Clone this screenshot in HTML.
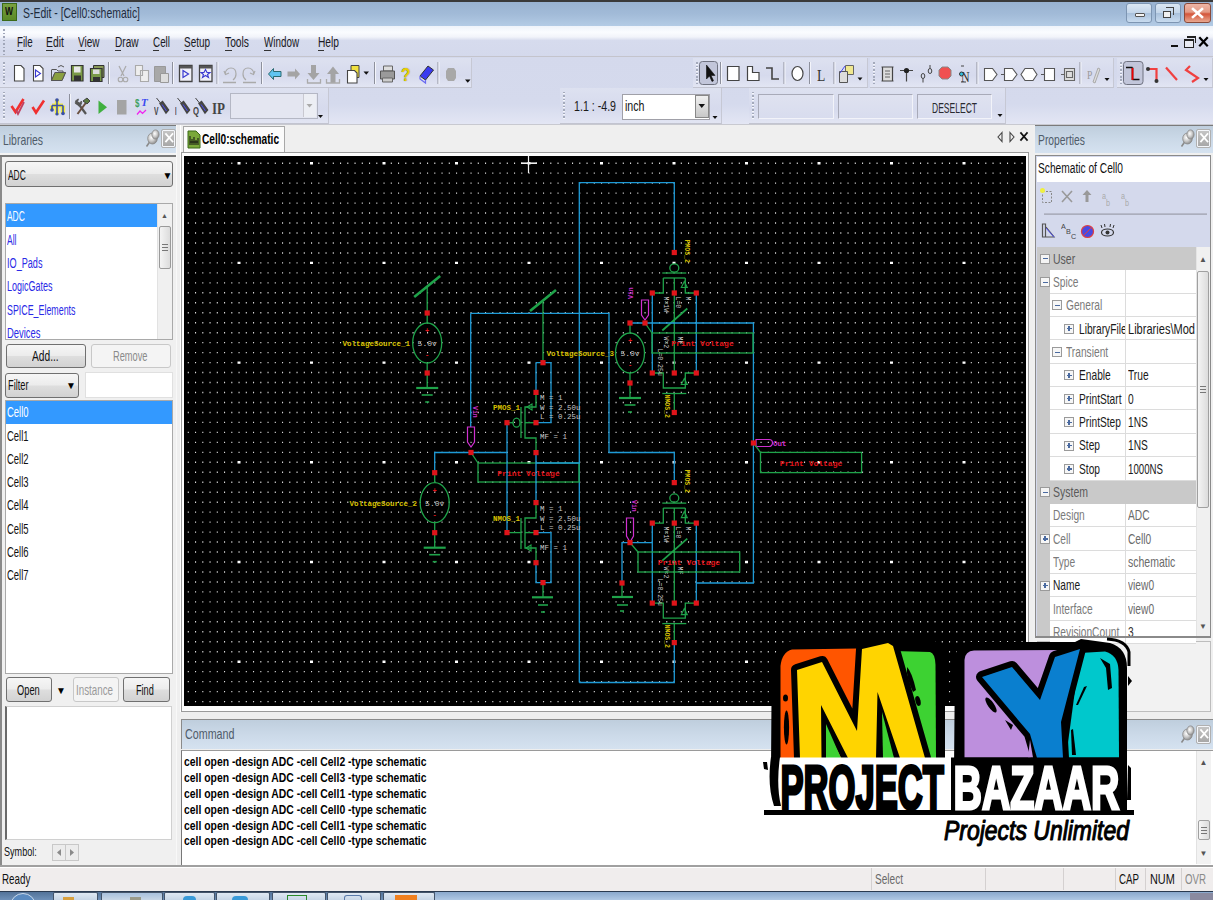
<!DOCTYPE html><html><head><meta charset="utf-8"><style>
*{margin:0;padding:0;box-sizing:border-box}
html,body{width:1213px;height:900px;overflow:hidden;background:#f0f0f0;font-family:"Liberation Sans",sans-serif}
.t{position:absolute;white-space:pre;line-height:1.2;transform-origin:0 0}
svg{position:absolute;left:0;top:0}
</style></head><body><div style="position:absolute;left:0px;top:0px;width:1213px;height:26px;background:linear-gradient(#97b1d0,#a2bbd8 55%,#b3cbe5)"></div>
<div style="position:absolute;left:0px;top:0px;width:1213px;height:1.5px;background:#3a3a3a"></div>
<div style="position:absolute;left:2px;top:2.5px;width:14.5px;height:18.5px;background:linear-gradient(#7aa040,#5a8a28);border:1px solid #3a6a18"></div>
<div class="t" style="left:4.5px;top:6.04px;font-size:10px;color:#111;font-weight:bold;transform:scaleX(0.85);">W</div>
<div class="t" style="left:23px;top:3.80px;font-size:15px;color:#1e2b3c;font-weight:normal;transform:scaleX(0.6948678331314988);">S-Edit - [Cell0:schematic]</div>
<div style="position:absolute;left:1126px;top:3px;width:26px;height:20px;background:linear-gradient(#dbe7f3,#c4d6ea 48%,#a9c1dc 52%,#c8dbef);border:1px solid #7d95b2;border-radius:3px"></div>
<div style="position:absolute;left:1155px;top:3px;width:26px;height:20px;background:linear-gradient(#dbe7f3,#c4d6ea 48%,#a9c1dc 52%,#c8dbef);border:1px solid #7d95b2;border-radius:3px"></div>
<div style="position:absolute;left:1134.5px;top:13px;width:10px;height:4px;background:#f4f4f4;border:1px solid #555;border-radius:1px"></div>
<div style="position:absolute;left:1162.5px;top:10.5px;width:8px;height:7.5px;background:#f0f0f0;border:1px solid #444"></div>
<div style="position:absolute;left:1165.5px;top:7px;width:8px;height:8px;border:1px solid #444;border-left:none;border-bottom:none"></div>
<div style="position:absolute;left:1184px;top:3px;width:27px;height:20px;background:linear-gradient(#eeb5a5,#e39a85 45%,#d4553a 55%,#e8a890);border:1px solid #8a4a3a;border-radius:3px"></div>
<svg width="9" height="8.0" style="position:absolute;left:1193px;top:8.5px;overflow:visible" viewBox="0 0 9 8.0"><path d="M0 0L9 8.0M9 0L0 8.0" fill="none" stroke="#fff" stroke-width="2.6" stroke-linecap="square"/></svg>
<div style="position:absolute;left:0px;top:26px;width:1213px;height:31px;background:linear-gradient(#eef3fa 0,#fafcff 20%,#f2f4fa 35%,#d6dbed 47%,#d4d9ec 100%)"></div>
<div style="position:absolute;left:0px;top:56px;width:1213px;height:1px;background:#c4c4cc"></div>
<div style="position:absolute;left:3px;top:29px;width:2px;height:26px;background:repeating-linear-gradient(#a0a6b8 0 1.5px,transparent 1.5px 3.5px)"></div>
<div class="t" style="left:16.5px;top:34.25px;font-size:14px;color:#1a1a24;font-weight:normal;transform:scaleX(0.6959991133769255);">File</div>
<div style="position:absolute;left:16.5px;top:49.5px;width:6.5px;height:1px;background:#333"></div>
<div class="t" style="left:46.2px;top:34.25px;font-size:14px;color:#1a1a24;font-weight:normal;transform:scaleX(0.7378620653919892);">Edit</div>
<div style="position:absolute;left:46.2px;top:49.5px;width:6.5px;height:1px;background:#333"></div>
<div class="t" style="left:78.3px;top:34.25px;font-size:14px;color:#1a1a24;font-weight:normal;transform:scaleX(0.7144934158600923);">View</div>
<div style="position:absolute;left:78.3px;top:49.5px;width:6.5px;height:1px;background:#333"></div>
<div class="t" style="left:114.6px;top:34.25px;font-size:14px;color:#1a1a24;font-weight:normal;transform:scaleX(0.7224167288450133);">Draw</div>
<div style="position:absolute;left:114.6px;top:49.5px;width:6.5px;height:1px;background:#333"></div>
<div class="t" style="left:152.5px;top:34.25px;font-size:14px;color:#1a1a24;font-weight:normal;transform:scaleX(0.7048914804016845);">Cell</div>
<div style="position:absolute;left:152.5px;top:49.5px;width:6.5px;height:1px;background:#333"></div>
<div class="t" style="left:184px;top:34.25px;font-size:14px;color:#1a1a24;font-weight:normal;transform:scaleX(0.7106980558307991);">Setup</div>
<div style="position:absolute;left:184px;top:49.5px;width:6.5px;height:1px;background:#333"></div>
<div class="t" style="left:225px;top:34.25px;font-size:14px;color:#1a1a24;font-weight:normal;transform:scaleX(0.7343660355708549);">Tools</div>
<div style="position:absolute;left:225px;top:49.5px;width:6.5px;height:1px;background:#333"></div>
<div class="t" style="left:264px;top:34.25px;font-size:14px;color:#1a1a24;font-weight:normal;transform:scaleX(0.7029259291802127);">Window</div>
<div style="position:absolute;left:264px;top:49.5px;width:6.5px;height:1px;background:#333"></div>
<div class="t" style="left:317.5px;top:34.25px;font-size:14px;color:#1a1a24;font-weight:normal;transform:scaleX(0.7293724358000304);">Help</div>
<div style="position:absolute;left:317.5px;top:49.5px;width:6.5px;height:1px;background:#333"></div>
<div style="position:absolute;left:1170.5px;top:45px;width:7.5px;height:2px;background:#111"></div>
<div style="position:absolute;left:1184px;top:38.5px;width:9.5px;height:9.5px;border:1.5px solid #222;border-top-width:2.5px;background:#e8eaf2"></div>
<div style="position:absolute;left:1187px;top:35.5px;width:8.5px;height:7px;border:1px solid #222;border-top-width:2px;border-left:none;border-bottom:none"></div>
<svg width="7" height="7.5" style="position:absolute;left:1200px;top:37.5px;overflow:visible" viewBox="0 0 7 7.5"><path d="M0 0L7 7.5M7 0L0 7.5" fill="none" stroke="#000" stroke-width="2.2" stroke-linecap="square"/></svg>
<div style="position:absolute;left:0px;top:57px;width:1213px;height:67px;background:linear-gradient(#d4d9ec 0,#d5daed 70%,#e3e6f4 100%)"></div>
<div style="position:absolute;left:0px;top:57.5px;width:472px;height:30.5px;background:linear-gradient(#dde1f0,#d6daed 60%,#e2e5f3);border-bottom:1px solid #c2c4d0;border-right:1px solid #c6c8d4"></div>
<div style="position:absolute;left:3px;top:61.5px;width:2px;height:22.5px;background:repeating-linear-gradient(#a4aabb 0 1.5px,#f6f7fc 1.5px 2.5px,transparent 2.5px 3.5px)"></div>
<div style="position:absolute;left:692.5px;top:57.5px;width:175px;height:30.5px;background:linear-gradient(#dde1f0,#d6daed 60%,#e2e5f3);border-bottom:1px solid #c2c4d0;border-right:1px solid #c6c8d4"></div>
<div style="position:absolute;left:695.5px;top:61.5px;width:2px;height:22.5px;background:repeating-linear-gradient(#a4aabb 0 1.5px,#f6f7fc 1.5px 2.5px,transparent 2.5px 3.5px)"></div>
<div style="position:absolute;left:870px;top:57.5px;width:243.5px;height:30.5px;background:linear-gradient(#dde1f0,#d6daed 60%,#e2e5f3);border-bottom:1px solid #c2c4d0;border-right:1px solid #c6c8d4"></div>
<div style="position:absolute;left:873px;top:61.5px;width:2px;height:22.5px;background:repeating-linear-gradient(#a4aabb 0 1.5px,#f6f7fc 1.5px 2.5px,transparent 2.5px 3.5px)"></div>
<div style="position:absolute;left:1117px;top:57.5px;width:96px;height:30.5px;background:linear-gradient(#dde1f0,#d6daed 60%,#e2e5f3);border-bottom:1px solid #c2c4d0;border-right:1px solid #c6c8d4"></div>
<div style="position:absolute;left:1120px;top:61.5px;width:2px;height:22.5px;background:repeating-linear-gradient(#a4aabb 0 1.5px,#f6f7fc 1.5px 2.5px,transparent 2.5px 3.5px)"></div>
<div style="position:absolute;left:0px;top:88px;width:328.5px;height:36px;background:linear-gradient(#dde1f0,#d6daed 60%,#e2e5f3);border-bottom:1px solid #c2c4d0;border-right:1px solid #c6c8d4"></div>
<div style="position:absolute;left:3px;top:92px;width:2px;height:28px;background:repeating-linear-gradient(#a4aabb 0 1.5px,#f6f7fc 1.5px 2.5px,transparent 2.5px 3.5px)"></div>
<div style="position:absolute;left:559.5px;top:88px;width:162.5px;height:36px;background:linear-gradient(#dde1f0,#d6daed 60%,#e2e5f3);border-bottom:1px solid #c2c4d0;border-right:1px solid #c6c8d4"></div>
<div style="position:absolute;left:562.5px;top:92px;width:2px;height:28px;background:repeating-linear-gradient(#a4aabb 0 1.5px,#f6f7fc 1.5px 2.5px,transparent 2.5px 3.5px)"></div>
<div style="position:absolute;left:749px;top:88px;width:256.5px;height:36px;background:linear-gradient(#dde1f0,#d6daed 60%,#e2e5f3);border-bottom:1px solid #c2c4d0;border-right:1px solid #c6c8d4"></div>
<div style="position:absolute;left:752px;top:92px;width:2px;height:28px;background:repeating-linear-gradient(#a4aabb 0 1.5px,#f6f7fc 1.5px 2.5px,transparent 2.5px 3.5px)"></div>
<div style="position:absolute;left:0px;top:123.5px;width:1213px;height:1.5px;background:#c8c9d0"></div>
<div style="position:absolute;left:0px;top:125px;width:177px;height:741px;background:#f0f0f0"></div>
<div style="position:absolute;left:0px;top:125px;width:1.5px;height:741px;background:#8a8a8a"></div>
<div style="position:absolute;left:175.5px;top:125px;width:1.5px;height:741px;background:#f8f8f8"></div>
<div style="position:absolute;left:0px;top:126px;width:176px;height:27px;background:linear-gradient(#bfcedd,#cbd9e8 50%,#d5e2f0)"></div>
<div style="position:absolute;left:0px;top:124.5px;width:176px;height:1.5px;background:#7a7a7a"></div>
<div class="t" style="left:3px;top:130.80px;font-size:15px;color:#505c6a;font-weight:normal;transform:scaleX(0.6954065140032053);">Libraries</div>
<svg width="16" height="20" style="position:absolute;left:145px;top:128px" viewBox="0 0 16 20"><defs><radialGradient id="pg" cx="0.4" cy="0.4" r="0.7"><stop offset="0" stop-color="#ffffff"/><stop offset="0.5" stop-color="#c8c8c8"/><stop offset="1" stop-color="#7a7a7a"/></radialGradient></defs><path d="M1.5 18.5 L5 13.5" stroke="#8a8a8a" stroke-width="1.6"/><ellipse cx="7.5" cy="10.5" rx="4.8" ry="5.5" fill="url(#pg)" stroke="#8a8a8a" stroke-width="0.8"/><ellipse cx="10.5" cy="6.5" rx="3.6" ry="4.6" fill="url(#pg)" stroke="#8a8a8a" stroke-width="0.8"/></svg>
<div style="position:absolute;left:162px;top:129.5px;width:13px;height:17px;background:linear-gradient(#c4c4c4,#a8a8a8);border:1px solid #f4f6fa;outline:0.5px solid #b0b0b0;border-radius:1px"></div>
<svg width="6.5" height="7.5" style="position:absolute;left:165.5px;top:134px;overflow:visible" viewBox="0 0 6.5 7.5"><path d="M0 0L6.5 7.5M6.5 0L0 7.5" fill="none" stroke="#fff" stroke-width="1.8" stroke-linecap="square"/></svg>
<div style="position:absolute;left:0px;top:153px;width:176px;height:2px;background:#f4f4f4"></div>
<div style="position:absolute;left:0px;top:155px;width:176px;height:1.5px;background:#7a7a7a"></div>
<div style="position:absolute;left:177px;top:125px;width:858px;height:593px;background:#efefef"></div>
<div style="position:absolute;left:179.5px;top:125px;width:1.5px;height:593px;background:#ffffff"></div>
<div style="position:absolute;left:183px;top:126px;width:102px;height:27px;background:#fbfbfb;border:1px solid #a8a8a8;border-bottom:none"></div>
<svg width="14" height="19" style="position:absolute;left:187px;top:130px" viewBox="0 0 14 19"><path d="M1 1h8l4 4v13h-12z" fill="#7aa83a" stroke="#3a6a18" stroke-width="1"/><path d="M3 6v9M5 9v6M7 7v8M9 10v5M11 8v7M3 12h8" stroke="#111" stroke-width="1"/></svg>
<div class="t" style="left:202px;top:129.83px;font-size:15.5px;color:#000;font-weight:bold;transform:scaleX(0.6524296317969418);">Cell0:schematic</div>
<svg width="6" height="10" style="position:absolute;left:997px;top:131.5px;overflow:visible" viewBox="0 0 6 10"><path d="M5 0.5L1 5L5 9.5z" fill="none" stroke="#444" stroke-width="1.1" stroke-linecap="square"/></svg>
<svg width="6" height="10" style="position:absolute;left:1009px;top:131.5px;overflow:visible" viewBox="0 0 6 10"><path d="M1 0.5L5 5L1 9.5z" fill="none" stroke="#444" stroke-width="1.1" stroke-linecap="square"/></svg>
<svg width="6" height="7" style="position:absolute;left:1021px;top:133px;overflow:visible" viewBox="0 0 6 7"><path d="M0 0L6 7M6 0L0 7" fill="none" stroke="#111" stroke-width="1.8" stroke-linecap="square"/></svg>
<div style="position:absolute;left:181px;top:152px;width:848px;height:560px;background:#fdfdfd;border:1px solid #9a9a9a"></div>
<div style="position:absolute;left:1033px;top:125px;width:180px;height:593px;background:#f0f0f0"></div>
<div style="position:absolute;left:1035px;top:126px;width:178px;height:27px;background:linear-gradient(#bfcedd,#cbd9e8 50%,#d5e2f0)"></div>
<div style="position:absolute;left:1035px;top:124.5px;width:178px;height:1.5px;background:#7a7a7a"></div>
<div class="t" style="left:1038px;top:130.80px;font-size:15px;color:#505c6a;font-weight:normal;transform:scaleX(0.6875349996000045);">Properties</div>
<svg width="16" height="20" style="position:absolute;left:1180px;top:128px" viewBox="0 0 16 20"><defs><radialGradient id="pg" cx="0.4" cy="0.4" r="0.7"><stop offset="0" stop-color="#ffffff"/><stop offset="0.5" stop-color="#c8c8c8"/><stop offset="1" stop-color="#7a7a7a"/></radialGradient></defs><path d="M1.5 18.5 L5 13.5" stroke="#8a8a8a" stroke-width="1.6"/><ellipse cx="7.5" cy="10.5" rx="4.8" ry="5.5" fill="url(#pg)" stroke="#8a8a8a" stroke-width="0.8"/><ellipse cx="10.5" cy="6.5" rx="3.6" ry="4.6" fill="url(#pg)" stroke="#8a8a8a" stroke-width="0.8"/></svg>
<div style="position:absolute;left:1197px;top:129.5px;width:13px;height:17px;background:linear-gradient(#c4c4c4,#a8a8a8);border:1px solid #f4f6fa;outline:0.5px solid #b0b0b0;border-radius:1px"></div>
<svg width="6.5" height="7.5" style="position:absolute;left:1200.5px;top:134px;overflow:visible" viewBox="0 0 6.5 7.5"><path d="M0 0L6.5 7.5M6.5 0L0 7.5" fill="none" stroke="#fff" stroke-width="1.8" stroke-linecap="square"/></svg>
<div style="position:absolute;left:1035px;top:155px;width:176px;height:482px;background:#d4d9ec;border:1px solid #8a8a8a"></div>
<div style="position:absolute;left:1037px;top:157px;width:173px;height:25px;background:#fff"></div>
<div class="t" style="left:1038px;top:160.25px;font-size:14px;color:#111;font-weight:normal;transform:scaleX(0.7282892165000348);">Schematic of Cell0</div>
<div style="position:absolute;left:1037px;top:640.5px;width:174px;height:71px;background:#f2f2f2;border:1px solid #bdbdbd"></div>
<div style="position:absolute;left:177px;top:712px;width:1036px;height:154px;background:#eeeeee"></div>
<div style="position:absolute;left:181px;top:719px;width:1032px;height:30px;background:linear-gradient(#bfcedd,#cbd9e8 50%,#d5e2f0);border-top:1px solid #8a8a8a;border-left:1px solid #8a8a8a"></div>
<div class="t" style="left:185px;top:724.80px;font-size:15px;color:#505c6a;font-weight:normal;transform:scaleX(0.7154471544715447);">Command</div>
<svg width="16" height="20" style="position:absolute;left:1180px;top:724px" viewBox="0 0 16 20"><defs><radialGradient id="pg" cx="0.4" cy="0.4" r="0.7"><stop offset="0" stop-color="#ffffff"/><stop offset="0.5" stop-color="#c8c8c8"/><stop offset="1" stop-color="#7a7a7a"/></radialGradient></defs><path d="M1.5 18.5 L5 13.5" stroke="#8a8a8a" stroke-width="1.6"/><ellipse cx="7.5" cy="10.5" rx="4.8" ry="5.5" fill="url(#pg)" stroke="#8a8a8a" stroke-width="0.8"/><ellipse cx="10.5" cy="6.5" rx="3.6" ry="4.6" fill="url(#pg)" stroke="#8a8a8a" stroke-width="0.8"/></svg>
<div style="position:absolute;left:1197px;top:725.5px;width:13px;height:17px;background:linear-gradient(#c4c4c4,#a8a8a8);border:1px solid #f4f6fa;outline:0.5px solid #b0b0b0;border-radius:1px"></div>
<svg width="6.5" height="7.5" style="position:absolute;left:1200.5px;top:730px;overflow:visible" viewBox="0 0 6.5 7.5"><path d="M0 0L6.5 7.5M6.5 0L0 7.5" fill="none" stroke="#fff" stroke-width="1.8" stroke-linecap="square"/></svg>
<div style="position:absolute;left:181px;top:749.5px;width:1032px;height:115px;background:#fff;border-left:1.5px solid #777;border-top:1px solid #9a9a9a"></div>
<div class="t" style="left:183.5px;top:754.22px;font-size:13.5px;color:#000;font-weight:bold;transform:scaleX(0.7690704826834018);">cell open -design ADC -cell Cell2 -type schematic</div>
<div class="t" style="left:183.5px;top:770.07px;font-size:13.5px;color:#000;font-weight:bold;transform:scaleX(0.7690704826834018);">cell open -design ADC -cell Cell3 -type schematic</div>
<div class="t" style="left:183.5px;top:785.92px;font-size:13.5px;color:#000;font-weight:bold;transform:scaleX(0.7690704826834018);">cell open -design ADC -cell Cell1 -type schematic</div>
<div class="t" style="left:183.5px;top:801.77px;font-size:13.5px;color:#000;font-weight:bold;transform:scaleX(0.7690704826834018);">cell open -design ADC -cell Cell0 -type schematic</div>
<div class="t" style="left:183.5px;top:817.62px;font-size:13.5px;color:#000;font-weight:bold;transform:scaleX(0.7690704826834018);">cell open -design ADC -cell Cell1 -type schematic</div>
<div class="t" style="left:183.5px;top:833.47px;font-size:13.5px;color:#000;font-weight:bold;transform:scaleX(0.7690704826834018);">cell open -design ADC -cell Cell0 -type schematic</div>
<div style="position:absolute;left:1196px;top:751px;width:15px;height:113px;background:#f2f2f2;border-left:1px solid #e2e2e2"></div>
<div class="t" style="left:1199.5px;top:758.43px;font-size:8px;color:#555;font-weight:normal;transform:scaleX(1.0);">▲</div>
<div class="t" style="left:1199.5px;top:849.43px;font-size:8px;color:#555;font-weight:normal;transform:scaleX(1.0);">▼</div>
<div style="position:absolute;left:1197.5px;top:820px;width:12px;height:20px;background:linear-gradient(90deg,#f6f6f6,#dcdcdc);border:1px solid #a0a0a0;border-radius:2px"></div>
<div style="position:absolute;left:1200.5px;top:827px;width:6px;height:1px;background:#777"></div>
<div style="position:absolute;left:1200.5px;top:830px;width:6px;height:1px;background:#777"></div>
<div style="position:absolute;left:1200.5px;top:833px;width:6px;height:1px;background:#777"></div>
<div style="position:absolute;left:0px;top:865px;width:1213px;height:1.5px;background:#a0a0a0"></div>
<div style="position:absolute;left:0px;top:866.5px;width:1213px;height:1px;background:#fff"></div>
<div style="position:absolute;left:0px;top:867.5px;width:1213px;height:23px;background:#f0eded"></div>
<div class="t" style="left:2px;top:870.75px;font-size:14px;color:#111;font-weight:normal;transform:scaleX(0.6993428216197014);">Ready</div>
<div style="position:absolute;left:871px;top:868px;width:1px;height:22px;background:#d4d0d0"></div>
<div style="position:absolute;left:985px;top:868px;width:1px;height:22px;background:#d4d0d0"></div>
<div style="position:absolute;left:1063px;top:868px;width:1px;height:22px;background:#d4d0d0"></div>
<div style="position:absolute;left:1115px;top:868px;width:1px;height:22px;background:#d4d0d0"></div>
<div style="position:absolute;left:1145px;top:868px;width:1px;height:22px;background:#d4d0d0"></div>
<div style="position:absolute;left:1181px;top:868px;width:1px;height:22px;background:#d4d0d0"></div>
<div class="t" style="left:875.4px;top:871.25px;font-size:14px;color:#6a6a6a;font-weight:normal;transform:scaleX(0.7196266936526677);">Select</div>
<div class="t" style="left:1119px;top:871.25px;font-size:14px;color:#111;font-weight:normal;transform:scaleX(0.6947459834997829);">CAP</div>
<div class="t" style="left:1150px;top:871.25px;font-size:14px;color:#111;font-weight:normal;transform:scaleX(0.7778485665278119);">NUM</div>
<div class="t" style="left:1185.3px;top:871.25px;font-size:14px;color:#8a8a8a;font-weight:normal;transform:scaleX(0.6921912178239238);">OVR</div>
<div style="position:absolute;left:0px;top:890.5px;width:1213px;height:9.5px;background:linear-gradient(#4f6f95,#6f90b8)"></div>
<div style="position:absolute;left:0px;top:890.5px;width:1213px;height:1px;background:#2a3a50"></div>
<div style="position:absolute;left:10px;top:893px;width:26px;height:26px;border-radius:50%;border:1.5px solid #c8d8ea;background:#5a8ac0"></div>
<div style="position:absolute;left:53px;top:892px;width:45px;height:8px;background:linear-gradient(#dfe8f3,#c8d6e6);border:1px solid #44546a;border-bottom:none;border-radius:2px 2px 0 0"></div>
<div style="position:absolute;left:101px;top:892px;width:61.5px;height:8px;background:linear-gradient(#a8c0dc,#c8d6e6);border:1px solid #44546a;border-bottom:none;border-radius:2px 2px 0 0"></div>
<div style="position:absolute;left:163.5px;top:892px;width:51.5px;height:8px;background:linear-gradient(#dfe8f3,#c8d6e6);border:1px solid #44546a;border-bottom:none;border-radius:2px 2px 0 0"></div>
<div style="position:absolute;left:216px;top:892px;width:54px;height:8px;background:linear-gradient(#dfe8f3,#c8d6e6);border:1px solid #44546a;border-bottom:none;border-radius:2px 2px 0 0"></div>
<div style="position:absolute;left:272px;top:892px;width:53.5px;height:8px;background:linear-gradient(#dfe8f3,#c8d6e6);border:1px solid #44546a;border-bottom:none;border-radius:2px 2px 0 0"></div>
<div style="position:absolute;left:327px;top:892px;width:54px;height:8px;background:linear-gradient(#dfe8f3,#c8d6e6);border:1px solid #44546a;border-bottom:none;border-radius:2px 2px 0 0"></div>
<div style="position:absolute;left:383px;top:892px;width:52px;height:8px;background:linear-gradient(#dfe8f3,#c8d6e6);border:1px solid #44546a;border-bottom:none;border-radius:2px 2px 0 0"></div>
<div style="position:absolute;left:435px;top:892px;width:778px;height:8px;background:linear-gradient(#8aa8cc,#b0c8e4)"></div>
<div style="position:absolute;left:1190px;top:893px;width:23px;height:7px;background:#8a8aa0"></div>
<div style="position:absolute;left:63px;top:897px;width:11px;height:3px;background:#d8a040"></div>
<div style="position:absolute;left:130px;top:897px;width:11px;height:3px;background:#9a9a8a"></div>
<div style="position:absolute;left:232px;top:896px;width:16px;height:4px;background:#3a9ad8;border-radius:4px 4px 0 0"></div>
<div style="position:absolute;left:183px;top:896px;width:13px;height:4px;background:#3a9ad8;border-radius:4px 4px 0 0"></div>
<div style="position:absolute;left:287px;top:895px;width:20px;height:5px;border:1.5px solid #2a8a2a;border-bottom:none"></div>
<div style="position:absolute;left:344px;top:895px;width:18px;height:5px;border:1.5px solid #5a7aaa;border-bottom:none;border-radius:3px 3px 0 0"></div>
<div style="position:absolute;left:395px;top:895px;width:22px;height:5px;background:#f08020"></div>
<div style="position:absolute;left:4.5px;top:161px;width:168px;height:26px;background:linear-gradient(#f6f6f6,#ececec 48%,#dedede 52%,#d2d2d2);border:1px solid #707070;border-radius:3px"></div>
<div class="t" style="left:8px;top:167.25px;font-size:14px;color:#111;font-weight:normal;transform:scaleX(0.6021714539438213);">ADC</div>
<div class="t" style="left:162.5px;top:169.53px;font-size:10px;color:#000;font-weight:normal;transform:scaleX(1.0);">▼</div>
<div style="position:absolute;left:4.5px;top:203px;width:168px;height:137px;background:#fff;border:1px solid #a9a9a9"></div>
<div style="position:absolute;left:5.5px;top:204px;width:151.5px;height:23px;background:#3399ff"></div>
<div class="t" style="left:7px;top:208.45px;font-size:14px;color:#fff;font-weight:normal;transform:scaleX(0.6021714539438213);">ADC</div>
<div class="t" style="left:7px;top:231.75px;font-size:14px;color:#2a2ae6;font-weight:normal;transform:scaleX(0.6105521078106485);">All</div>
<div class="t" style="left:7px;top:255.05px;font-size:14px;color:#2a2ae6;font-weight:normal;transform:scaleX(0.6516975113874961);">IO_Pads</div>
<div class="t" style="left:7px;top:278.35px;font-size:14px;color:#2a2ae6;font-weight:normal;transform:scaleX(0.6425107342538535);">LogicGates</div>
<div class="t" style="left:7px;top:301.65px;font-size:14px;color:#2a2ae6;font-weight:normal;transform:scaleX(0.6333411345243151);">SPICE_Elements</div>
<div class="t" style="left:7px;top:324.95px;font-size:14px;color:#2a2ae6;font-weight:normal;transform:scaleX(0.6728005322153464);">Devices</div>
<div style="position:absolute;left:157px;top:204px;width:14.5px;height:135px;background:#f0f0f0;border-left:1px solid #e2e2e2"></div>
<div class="t" style="left:161px;top:212.37px;font-size:7px;color:#555;font-weight:normal;transform:scaleX(1.0);">▲</div>
<div style="position:absolute;left:158.5px;top:226px;width:12px;height:43px;background:linear-gradient(90deg,#f4f4f4,#dcdcdc);border:1px solid #9a9a9a;border-radius:2px"></div>
<div style="position:absolute;left:161.5px;top:244px;width:6px;height:1px;background:#777"></div>
<div style="position:absolute;left:161.5px;top:247px;width:6px;height:1px;background:#777"></div>
<div style="position:absolute;left:161.5px;top:250px;width:6px;height:1px;background:#777"></div>
<div style="position:absolute;left:5.5px;top:344px;width:80px;height:24px;background:linear-gradient(#f6f6f6,#ececec 48%,#dedede 52%,#d2d2d2);border:1px solid #707070;border-radius:3px"></div>
<div class="t" style="left:31.7px;top:347.75px;font-size:14px;color:#111;font-weight:normal;transform:scaleX(0.7299631771852333);">Add...</div>
<div style="position:absolute;left:90.5px;top:344px;width:80px;height:24px;background:#f4f4f4;border:1px solid #c8c8c8;border-radius:3px"></div>
<div class="t" style="left:113px;top:347.75px;font-size:14px;color:#8a8a8a;font-weight:normal;transform:scaleX(0.6618308254900785);">Remove</div>
<div style="position:absolute;left:4.5px;top:372.5px;width:74px;height:25px;background:linear-gradient(#f6f6f6,#ececec 48%,#dedede 52%,#d2d2d2);border:1px solid #707070;border-radius:3px"></div>
<div class="t" style="left:7.5px;top:376.75px;font-size:14px;color:#111;font-weight:normal;transform:scaleX(0.6589852029694516);">Filter</div>
<div class="t" style="left:66px;top:379.54px;font-size:10px;color:#000;font-weight:normal;transform:scaleX(1.0);">▼</div>
<div style="position:absolute;left:84.5px;top:372px;width:88px;height:26px;background:#fff;border:1px solid #e0e0e0"></div>
<div style="position:absolute;left:4.5px;top:399.5px;width:168px;height:274px;background:#fff;border:1px solid #a9a9a9"></div>
<div style="position:absolute;left:5.5px;top:401px;width:166px;height:23px;background:#3399ff"></div>
<div class="t" style="left:6.5px;top:404.25px;font-size:14px;color:#fff;font-weight:normal;transform:scaleX(0.67392837551916);">Cell0</div>
<div class="t" style="left:6.5px;top:427.55px;font-size:14px;color:#111;font-weight:normal;transform:scaleX(0.67392837551916);">Cell1</div>
<div class="t" style="left:6.5px;top:450.85px;font-size:14px;color:#111;font-weight:normal;transform:scaleX(0.67392837551916);">Cell2</div>
<div class="t" style="left:6.5px;top:474.15px;font-size:14px;color:#111;font-weight:normal;transform:scaleX(0.67392837551916);">Cell3</div>
<div class="t" style="left:6.5px;top:497.45px;font-size:14px;color:#111;font-weight:normal;transform:scaleX(0.67392837551916);">Cell4</div>
<div class="t" style="left:6.5px;top:520.75px;font-size:14px;color:#111;font-weight:normal;transform:scaleX(0.67392837551916);">Cell5</div>
<div class="t" style="left:6.5px;top:544.05px;font-size:14px;color:#111;font-weight:normal;transform:scaleX(0.67392837551916);">Cell6</div>
<div class="t" style="left:6.5px;top:567.35px;font-size:14px;color:#111;font-weight:normal;transform:scaleX(0.67392837551916);">Cell7</div>
<div style="position:absolute;left:5.5px;top:676.6px;width:46px;height:25px;background:linear-gradient(#f6f6f6,#ececec 48%,#dedede 52%,#d2d2d2);border:1px solid #707070;border-radius:3px"></div>
<div class="t" style="left:16.6px;top:682.25px;font-size:14px;color:#111;font-weight:normal;transform:scaleX(0.6628644431263403);">Open</div>
<div class="t" style="left:56px;top:684.53px;font-size:10px;color:#000;font-weight:normal;transform:scaleX(1.0);">▼</div>
<div style="position:absolute;left:72.5px;top:676.6px;width:46px;height:25px;background:#f4f4f4;border:1px solid #c8c8c8;border-radius:3px"></div>
<div class="t" style="left:75.7px;top:682.25px;font-size:14px;color:#9a9a9a;font-weight:normal;transform:scaleX(0.6991685563114134);">Instance</div>
<div style="position:absolute;left:122.5px;top:676.6px;width:47px;height:25px;background:linear-gradient(#f6f6f6,#ececec 48%,#dedede 52%,#d2d2d2);border:1px solid #707070;border-radius:3px"></div>
<div class="t" style="left:135.8px;top:682.25px;font-size:14px;color:#111;font-weight:normal;transform:scaleX(0.6536382727241431);">Find</div>
<div style="position:absolute;left:4.5px;top:705.5px;width:167px;height:134px;background:#fff;border:1px solid #d0d0d0;border-left:2px solid #6a6a6a"></div>
<div class="t" style="left:3.9px;top:843.70px;font-size:13px;color:#111;font-weight:normal;transform:scaleX(0.6984900210957827);">Symbol:</div>
<div style="position:absolute;left:52px;top:844px;width:14px;height:17px;background:#ececec;border:1px solid #c8c8c8"></div>
<div style="position:absolute;left:65px;top:844px;width:14px;height:17px;background:#ececec;border:1px solid #c8c8c8"></div>
<svg width="4" height="7" style="position:absolute;left:57px;top:849px;overflow:visible" viewBox="0 0 4 7"><path d="M4 0L0 3.5L4 7z" fill="#8a8a8a" stroke="none" stroke-width="1" stroke-linecap="square"/></svg>
<svg width="4" height="7" style="position:absolute;left:70px;top:849px;overflow:visible" viewBox="0 0 4 7"><path d="M0 0L4 3.5L0 7z" fill="#8a8a8a" stroke="none" stroke-width="1" stroke-linecap="square"/></svg>
<div style="position:absolute;left:1037px;top:247px;width:173px;height:390px;background:#c9c9c9"></div>
<div style="position:absolute;left:1037px;top:247.0px;width:159px;height:23.35px;background:#c9c9c9"></div>
<div style="position:absolute;left:1040px;top:253.7px;width:10px;height:10px;background:#f4f4f4;border:1px solid #9a9a9a"></div>
<div style="position:absolute;left:1042.5px;top:258.2px;width:5px;height:1.2px;background:#4a6aa0"></div>
<div class="t" style="left:1053px;top:249.60px;font-size:15px;color:#5a5a5a;font-weight:normal;transform:scaleX(0.7);">User</div>
<div style="position:absolute;left:1050px;top:270.35px;width:146px;height:23.35px;background:#fff"></div>
<div style="position:absolute;left:1050px;top:292.70000000000005px;width:146px;height:1px;background:#dcdcdc"></div>
<div style="position:absolute;left:1125px;top:270.35px;width:1px;height:23.35px;background:#dcdcdc"></div>
<div style="position:absolute;left:1040px;top:277.05px;width:10px;height:10px;background:#f6f6f6;border:1px solid #9a9a9a"></div>
<div style="position:absolute;left:1042.5px;top:281.55px;width:5px;height:1.2px;background:#4a6aa0"></div>
<div style="position:absolute;left:1053px;top:270.35px;width:72px;height:23px;overflow:hidden">
<div class="t" style="left:0px;top:2.60px;font-size:15px;color:#7a7a7a;font-weight:normal;transform:scaleX(0.68);">Spice</div>
</div>
<div style="position:absolute;left:1128px;top:270.35px;width:67px;height:23px;overflow:hidden">
<div class="t" style="left:0px;top:2.60px;font-size:15px;color:#6a6a6a;font-weight:normal;transform:scaleX(0.68);"></div>
</div>
<div style="position:absolute;left:1050px;top:293.7px;width:146px;height:23.35px;background:#fff"></div>
<div style="position:absolute;left:1050px;top:316.05px;width:146px;height:1px;background:#dcdcdc"></div>
<div style="position:absolute;left:1125px;top:293.7px;width:1px;height:23.35px;background:#dcdcdc"></div>
<div style="position:absolute;left:1052px;top:300.4px;width:10px;height:10px;background:#f6f6f6;border:1px solid #9a9a9a"></div>
<div style="position:absolute;left:1054.5px;top:304.9px;width:5px;height:1.2px;background:#4a6aa0"></div>
<div style="position:absolute;left:1066px;top:293.7px;width:59px;height:23px;overflow:hidden">
<div class="t" style="left:0px;top:2.60px;font-size:15px;color:#7a7a7a;font-weight:normal;transform:scaleX(0.68);">General</div>
</div>
<div style="position:absolute;left:1128px;top:293.7px;width:67px;height:23px;overflow:hidden">
<div class="t" style="left:0px;top:2.60px;font-size:15px;color:#6a6a6a;font-weight:normal;transform:scaleX(0.68);"></div>
</div>
<div style="position:absolute;left:1050px;top:317.05px;width:146px;height:23.35px;background:#fff"></div>
<div style="position:absolute;left:1050px;top:339.40000000000003px;width:146px;height:1px;background:#dcdcdc"></div>
<div style="position:absolute;left:1125px;top:317.05px;width:1px;height:23.35px;background:#dcdcdc"></div>
<div style="position:absolute;left:1064px;top:323.75px;width:10px;height:10px;background:#f6f6f6;border:1px solid #9a9a9a"></div>
<div style="position:absolute;left:1066.5px;top:328.25px;width:5px;height:1.2px;background:#4a6aa0"></div>
<div style="position:absolute;left:1068.4px;top:326.25px;width:1.2px;height:5px;background:#4a6aa0"></div>
<div style="position:absolute;left:1078.5px;top:317.05px;width:46.5px;height:23px;overflow:hidden">
<div class="t" style="left:0px;top:2.60px;font-size:15px;color:#1a1a1a;font-weight:normal;transform:scaleX(0.68);">LibraryFile</div>
</div>
<div style="position:absolute;left:1128px;top:317.05px;width:67px;height:23px;overflow:hidden">
<div class="t" style="left:0px;top:2.60px;font-size:15px;color:#1a1a1a;font-weight:normal;transform:scaleX(0.7373588863954877);">Libraries\Mod</div>
</div>
<div style="position:absolute;left:1050px;top:340.4px;width:146px;height:23.35px;background:#fff"></div>
<div style="position:absolute;left:1050px;top:362.75px;width:146px;height:1px;background:#dcdcdc"></div>
<div style="position:absolute;left:1125px;top:340.4px;width:1px;height:23.35px;background:#dcdcdc"></div>
<div style="position:absolute;left:1052px;top:347.09999999999997px;width:10px;height:10px;background:#f6f6f6;border:1px solid #9a9a9a"></div>
<div style="position:absolute;left:1054.5px;top:351.59999999999997px;width:5px;height:1.2px;background:#4a6aa0"></div>
<div style="position:absolute;left:1066px;top:340.4px;width:59px;height:23px;overflow:hidden">
<div class="t" style="left:0px;top:2.60px;font-size:15px;color:#7a7a7a;font-weight:normal;transform:scaleX(0.68);">Transient</div>
</div>
<div style="position:absolute;left:1128px;top:340.4px;width:67px;height:23px;overflow:hidden">
<div class="t" style="left:0px;top:2.60px;font-size:15px;color:#6a6a6a;font-weight:normal;transform:scaleX(0.68);"></div>
</div>
<div style="position:absolute;left:1050px;top:363.75px;width:146px;height:23.35px;background:#fff"></div>
<div style="position:absolute;left:1050px;top:386.1px;width:146px;height:1px;background:#dcdcdc"></div>
<div style="position:absolute;left:1125px;top:363.75px;width:1px;height:23.35px;background:#dcdcdc"></div>
<div style="position:absolute;left:1064px;top:370.45px;width:10px;height:10px;background:#f6f6f6;border:1px solid #9a9a9a"></div>
<div style="position:absolute;left:1066.5px;top:374.95px;width:5px;height:1.2px;background:#4a6aa0"></div>
<div style="position:absolute;left:1068.4px;top:372.95px;width:1.2px;height:5px;background:#4a6aa0"></div>
<div style="position:absolute;left:1078.5px;top:363.75px;width:46.5px;height:23px;overflow:hidden">
<div class="t" style="left:0px;top:2.60px;font-size:15px;color:#1a1a1a;font-weight:normal;transform:scaleX(0.68);">Enable</div>
</div>
<div style="position:absolute;left:1128px;top:363.75px;width:67px;height:23px;overflow:hidden">
<div class="t" style="left:0px;top:2.60px;font-size:15px;color:#1a1a1a;font-weight:normal;transform:scaleX(0.68);">True</div>
</div>
<div style="position:absolute;left:1050px;top:387.1px;width:146px;height:23.35px;background:#fff"></div>
<div style="position:absolute;left:1050px;top:409.45000000000005px;width:146px;height:1px;background:#dcdcdc"></div>
<div style="position:absolute;left:1125px;top:387.1px;width:1px;height:23.35px;background:#dcdcdc"></div>
<div style="position:absolute;left:1064px;top:393.8px;width:10px;height:10px;background:#f6f6f6;border:1px solid #9a9a9a"></div>
<div style="position:absolute;left:1066.5px;top:398.3px;width:5px;height:1.2px;background:#4a6aa0"></div>
<div style="position:absolute;left:1068.4px;top:396.3px;width:1.2px;height:5px;background:#4a6aa0"></div>
<div style="position:absolute;left:1078.5px;top:387.1px;width:46.5px;height:23px;overflow:hidden">
<div class="t" style="left:0px;top:2.60px;font-size:15px;color:#1a1a1a;font-weight:normal;transform:scaleX(0.68);">PrintStart</div>
</div>
<div style="position:absolute;left:1128px;top:387.1px;width:67px;height:23px;overflow:hidden">
<div class="t" style="left:0px;top:2.60px;font-size:15px;color:#1a1a1a;font-weight:normal;transform:scaleX(0.68);">0</div>
</div>
<div style="position:absolute;left:1050px;top:410.45000000000005px;width:146px;height:23.35px;background:#fff"></div>
<div style="position:absolute;left:1050px;top:432.80000000000007px;width:146px;height:1px;background:#dcdcdc"></div>
<div style="position:absolute;left:1125px;top:410.45000000000005px;width:1px;height:23.35px;background:#dcdcdc"></div>
<div style="position:absolute;left:1064px;top:417.15000000000003px;width:10px;height:10px;background:#f6f6f6;border:1px solid #9a9a9a"></div>
<div style="position:absolute;left:1066.5px;top:421.65000000000003px;width:5px;height:1.2px;background:#4a6aa0"></div>
<div style="position:absolute;left:1068.4px;top:419.65000000000003px;width:1.2px;height:5px;background:#4a6aa0"></div>
<div style="position:absolute;left:1078.5px;top:410.45000000000005px;width:46.5px;height:23px;overflow:hidden">
<div class="t" style="left:0px;top:2.60px;font-size:15px;color:#1a1a1a;font-weight:normal;transform:scaleX(0.68);">PrintStep</div>
</div>
<div style="position:absolute;left:1128px;top:410.45000000000005px;width:67px;height:23px;overflow:hidden">
<div class="t" style="left:0px;top:2.60px;font-size:15px;color:#1a1a1a;font-weight:normal;transform:scaleX(0.68);">1NS</div>
</div>
<div style="position:absolute;left:1050px;top:433.8px;width:146px;height:23.35px;background:#fff"></div>
<div style="position:absolute;left:1050px;top:456.15000000000003px;width:146px;height:1px;background:#dcdcdc"></div>
<div style="position:absolute;left:1125px;top:433.8px;width:1px;height:23.35px;background:#dcdcdc"></div>
<div style="position:absolute;left:1064px;top:440.5px;width:10px;height:10px;background:#f6f6f6;border:1px solid #9a9a9a"></div>
<div style="position:absolute;left:1066.5px;top:445.0px;width:5px;height:1.2px;background:#4a6aa0"></div>
<div style="position:absolute;left:1068.4px;top:443.0px;width:1.2px;height:5px;background:#4a6aa0"></div>
<div style="position:absolute;left:1078.5px;top:433.8px;width:46.5px;height:23px;overflow:hidden">
<div class="t" style="left:0px;top:2.60px;font-size:15px;color:#1a1a1a;font-weight:normal;transform:scaleX(0.68);">Step</div>
</div>
<div style="position:absolute;left:1128px;top:433.8px;width:67px;height:23px;overflow:hidden">
<div class="t" style="left:0px;top:2.60px;font-size:15px;color:#1a1a1a;font-weight:normal;transform:scaleX(0.68);">1NS</div>
</div>
<div style="position:absolute;left:1050px;top:457.15px;width:146px;height:23.35px;background:#fff"></div>
<div style="position:absolute;left:1050px;top:479.5px;width:146px;height:1px;background:#dcdcdc"></div>
<div style="position:absolute;left:1125px;top:457.15px;width:1px;height:23.35px;background:#dcdcdc"></div>
<div style="position:absolute;left:1064px;top:463.84999999999997px;width:10px;height:10px;background:#f6f6f6;border:1px solid #9a9a9a"></div>
<div style="position:absolute;left:1066.5px;top:468.34999999999997px;width:5px;height:1.2px;background:#4a6aa0"></div>
<div style="position:absolute;left:1068.4px;top:466.34999999999997px;width:1.2px;height:5px;background:#4a6aa0"></div>
<div style="position:absolute;left:1078.5px;top:457.15px;width:46.5px;height:23px;overflow:hidden">
<div class="t" style="left:0px;top:2.60px;font-size:15px;color:#1a1a1a;font-weight:normal;transform:scaleX(0.68);">Stop</div>
</div>
<div style="position:absolute;left:1128px;top:457.15px;width:67px;height:23px;overflow:hidden">
<div class="t" style="left:0px;top:2.60px;font-size:15px;color:#1a1a1a;font-weight:normal;transform:scaleX(0.645709920583445);">1000NS</div>
</div>
<div style="position:absolute;left:1037px;top:480.5px;width:159px;height:23.35px;background:#c9c9c9"></div>
<div style="position:absolute;left:1040px;top:487.2px;width:10px;height:10px;background:#f4f4f4;border:1px solid #9a9a9a"></div>
<div style="position:absolute;left:1042.5px;top:491.7px;width:5px;height:1.2px;background:#4a6aa0"></div>
<div class="t" style="left:1053px;top:483.10px;font-size:15px;color:#5a5a5a;font-weight:normal;transform:scaleX(0.7);">System</div>
<div style="position:absolute;left:1050px;top:503.85px;width:146px;height:23.35px;background:#fff"></div>
<div style="position:absolute;left:1050px;top:526.2px;width:146px;height:1px;background:#dcdcdc"></div>
<div style="position:absolute;left:1125px;top:503.85px;width:1px;height:23.35px;background:#dcdcdc"></div>
<div style="position:absolute;left:1053px;top:503.85px;width:72px;height:23px;overflow:hidden">
<div class="t" style="left:0px;top:2.60px;font-size:15px;color:#7a7a7a;font-weight:normal;transform:scaleX(0.68);">Design</div>
</div>
<div style="position:absolute;left:1128px;top:503.85px;width:67px;height:23px;overflow:hidden">
<div class="t" style="left:0px;top:2.60px;font-size:15px;color:#6a6a6a;font-weight:normal;transform:scaleX(0.68);">ADC</div>
</div>
<div style="position:absolute;left:1050px;top:527.2px;width:146px;height:23.35px;background:#fff"></div>
<div style="position:absolute;left:1050px;top:549.5500000000001px;width:146px;height:1px;background:#dcdcdc"></div>
<div style="position:absolute;left:1125px;top:527.2px;width:1px;height:23.35px;background:#dcdcdc"></div>
<div style="position:absolute;left:1040px;top:533.9000000000001px;width:10px;height:10px;background:#f6f6f6;border:1px solid #9a9a9a"></div>
<div style="position:absolute;left:1042.5px;top:538.4000000000001px;width:5px;height:1.2px;background:#4a6aa0"></div>
<div style="position:absolute;left:1044.4px;top:536.4000000000001px;width:1.2px;height:5px;background:#4a6aa0"></div>
<div style="position:absolute;left:1053px;top:527.2px;width:72px;height:23px;overflow:hidden">
<div class="t" style="left:0px;top:2.60px;font-size:15px;color:#7a7a7a;font-weight:normal;transform:scaleX(0.68);">Cell</div>
</div>
<div style="position:absolute;left:1128px;top:527.2px;width:67px;height:23px;overflow:hidden">
<div class="t" style="left:0px;top:2.60px;font-size:15px;color:#6a6a6a;font-weight:normal;transform:scaleX(0.68);">Cell0</div>
</div>
<div style="position:absolute;left:1050px;top:550.55px;width:146px;height:23.35px;background:#fff"></div>
<div style="position:absolute;left:1050px;top:572.9px;width:146px;height:1px;background:#dcdcdc"></div>
<div style="position:absolute;left:1125px;top:550.55px;width:1px;height:23.35px;background:#dcdcdc"></div>
<div style="position:absolute;left:1053px;top:550.55px;width:72px;height:23px;overflow:hidden">
<div class="t" style="left:0px;top:2.60px;font-size:15px;color:#7a7a7a;font-weight:normal;transform:scaleX(0.68);">Type</div>
</div>
<div style="position:absolute;left:1128px;top:550.55px;width:67px;height:23px;overflow:hidden">
<div class="t" style="left:0px;top:2.60px;font-size:15px;color:#6a6a6a;font-weight:normal;transform:scaleX(0.7005461445894658);">schematic</div>
</div>
<div style="position:absolute;left:1050px;top:573.9000000000001px;width:146px;height:23.35px;background:#fff"></div>
<div style="position:absolute;left:1050px;top:596.2500000000001px;width:146px;height:1px;background:#dcdcdc"></div>
<div style="position:absolute;left:1125px;top:573.9000000000001px;width:1px;height:23.35px;background:#dcdcdc"></div>
<div style="position:absolute;left:1040px;top:580.6000000000001px;width:10px;height:10px;background:#f6f6f6;border:1px solid #9a9a9a"></div>
<div style="position:absolute;left:1042.5px;top:585.1000000000001px;width:5px;height:1.2px;background:#4a6aa0"></div>
<div style="position:absolute;left:1044.4px;top:583.1000000000001px;width:1.2px;height:5px;background:#4a6aa0"></div>
<div style="position:absolute;left:1053px;top:573.9000000000001px;width:72px;height:23px;overflow:hidden">
<div class="t" style="left:0px;top:2.60px;font-size:15px;color:#1a1a1a;font-weight:normal;transform:scaleX(0.68);">Name</div>
</div>
<div style="position:absolute;left:1128px;top:573.9000000000001px;width:67px;height:23px;overflow:hidden">
<div class="t" style="left:0px;top:2.60px;font-size:15px;color:#6a6a6a;font-weight:normal;transform:scaleX(0.68);">view0</div>
</div>
<div style="position:absolute;left:1050px;top:597.25px;width:146px;height:23.35px;background:#fff"></div>
<div style="position:absolute;left:1050px;top:619.6px;width:146px;height:1px;background:#dcdcdc"></div>
<div style="position:absolute;left:1125px;top:597.25px;width:1px;height:23.35px;background:#dcdcdc"></div>
<div style="position:absolute;left:1053px;top:597.25px;width:72px;height:23px;overflow:hidden">
<div class="t" style="left:0px;top:2.60px;font-size:15px;color:#7a7a7a;font-weight:normal;transform:scaleX(0.68);">Interface</div>
</div>
<div style="position:absolute;left:1128px;top:597.25px;width:67px;height:23px;overflow:hidden">
<div class="t" style="left:0px;top:2.60px;font-size:15px;color:#6a6a6a;font-weight:normal;transform:scaleX(0.68);">view0</div>
</div>
<div style="position:absolute;left:1050px;top:620.6px;width:146px;height:23.35px;background:#fff"></div>
<div style="position:absolute;left:1050px;top:642.95px;width:146px;height:1px;background:#dcdcdc"></div>
<div style="position:absolute;left:1125px;top:620.6px;width:1px;height:23.35px;background:#dcdcdc"></div>
<div style="position:absolute;left:1053px;top:620.6px;width:72px;height:23px;overflow:hidden">
<div class="t" style="left:0px;top:2.60px;font-size:15px;color:#7a7a7a;font-weight:normal;transform:scaleX(0.68);">RevisionCount</div>
</div>
<div style="position:absolute;left:1128px;top:620.6px;width:67px;height:23px;overflow:hidden">
<div class="t" style="left:0px;top:2.60px;font-size:15px;color:#333;font-weight:normal;transform:scaleX(0.68);">3</div>
</div>
<div style="position:absolute;left:1196px;top:247px;width:14px;height:390px;background:#f0f0f0;border-left:1px solid #e4e4e4"></div>
<div class="t" style="left:1199px;top:255.43px;font-size:8px;color:#555;font-weight:normal;transform:scaleX(1.0);">▲</div>
<div class="t" style="left:1199px;top:622.43px;font-size:8px;color:#555;font-weight:normal;transform:scaleX(1.0);">▼</div>
<div style="position:absolute;left:1197px;top:271px;width:12px;height:237px;background:linear-gradient(90deg,#f4f4f4,#dcdcdc);border:1px solid #a0a0a0;border-radius:2px"></div>
<div style="position:absolute;left:1200px;top:386px;width:6px;height:1px;background:#777"></div>
<div style="position:absolute;left:1200px;top:389px;width:6px;height:1px;background:#777"></div>
<div style="position:absolute;left:1200px;top:392px;width:6px;height:1px;background:#777"></div>
<div style="position:absolute;left:1035px;top:636px;width:176px;height:1.5px;background:#8a8a8a"></div>
<div style="position:absolute;left:184px;top:156px;width:842px;height:550px;background:#000"></div>
<svg width="1213" height="900" viewBox="0 0 1213 900" style="position:absolute;left:0;top:0">
<defs><clipPath id="cc"><rect x="184" y="156" width="842" height="550"/></clipPath></defs>
<g clip-path="url(#cc)">
<defs><path id="row" d="M187.75 -0.7h1.1v1.4h-1.1zM195.00 -0.7h1.1v1.4h-1.1zM202.25 -0.7h1.1v1.4h-1.1zM209.50 -0.7h1.1v1.4h-1.1zM216.75 -0.7h1.1v1.4h-1.1zM224.00 -0.7h1.1v1.4h-1.1zM231.25 -0.7h1.1v1.4h-1.1zM238.50 -0.7h1.1v1.4h-1.1zM245.75 -0.7h1.1v1.4h-1.1zM253.00 -0.7h1.1v1.4h-1.1zM260.25 -0.7h1.1v1.4h-1.1zM267.50 -0.7h1.1v1.4h-1.1zM274.75 -0.7h1.1v1.4h-1.1zM282.00 -0.7h1.1v1.4h-1.1zM289.25 -0.7h1.1v1.4h-1.1zM296.50 -0.7h1.1v1.4h-1.1zM303.75 -0.7h1.1v1.4h-1.1zM311.00 -0.7h1.1v1.4h-1.1zM318.25 -0.7h1.1v1.4h-1.1zM325.50 -0.7h1.1v1.4h-1.1zM332.75 -0.7h1.1v1.4h-1.1zM340.00 -0.7h1.1v1.4h-1.1zM347.25 -0.7h1.1v1.4h-1.1zM354.50 -0.7h1.1v1.4h-1.1zM361.75 -0.7h1.1v1.4h-1.1zM369.00 -0.7h1.1v1.4h-1.1zM376.25 -0.7h1.1v1.4h-1.1zM383.50 -0.7h1.1v1.4h-1.1zM390.75 -0.7h1.1v1.4h-1.1zM398.00 -0.7h1.1v1.4h-1.1zM405.25 -0.7h1.1v1.4h-1.1zM412.50 -0.7h1.1v1.4h-1.1zM419.75 -0.7h1.1v1.4h-1.1zM427.00 -0.7h1.1v1.4h-1.1zM434.25 -0.7h1.1v1.4h-1.1zM441.50 -0.7h1.1v1.4h-1.1zM448.75 -0.7h1.1v1.4h-1.1zM456.00 -0.7h1.1v1.4h-1.1zM463.25 -0.7h1.1v1.4h-1.1zM470.50 -0.7h1.1v1.4h-1.1zM477.75 -0.7h1.1v1.4h-1.1zM485.00 -0.7h1.1v1.4h-1.1zM492.25 -0.7h1.1v1.4h-1.1zM499.50 -0.7h1.1v1.4h-1.1zM506.75 -0.7h1.1v1.4h-1.1zM514.00 -0.7h1.1v1.4h-1.1zM521.25 -0.7h1.1v1.4h-1.1zM528.50 -0.7h1.1v1.4h-1.1zM535.75 -0.7h1.1v1.4h-1.1zM543.00 -0.7h1.1v1.4h-1.1zM550.25 -0.7h1.1v1.4h-1.1zM557.50 -0.7h1.1v1.4h-1.1zM564.75 -0.7h1.1v1.4h-1.1zM572.00 -0.7h1.1v1.4h-1.1zM579.25 -0.7h1.1v1.4h-1.1zM586.50 -0.7h1.1v1.4h-1.1zM593.75 -0.7h1.1v1.4h-1.1zM601.00 -0.7h1.1v1.4h-1.1zM608.25 -0.7h1.1v1.4h-1.1zM615.50 -0.7h1.1v1.4h-1.1zM622.75 -0.7h1.1v1.4h-1.1zM630.00 -0.7h1.1v1.4h-1.1zM637.25 -0.7h1.1v1.4h-1.1zM644.50 -0.7h1.1v1.4h-1.1zM651.75 -0.7h1.1v1.4h-1.1zM659.00 -0.7h1.1v1.4h-1.1zM666.25 -0.7h1.1v1.4h-1.1zM673.50 -0.7h1.1v1.4h-1.1zM680.75 -0.7h1.1v1.4h-1.1zM688.00 -0.7h1.1v1.4h-1.1zM695.25 -0.7h1.1v1.4h-1.1zM702.50 -0.7h1.1v1.4h-1.1zM709.75 -0.7h1.1v1.4h-1.1zM717.00 -0.7h1.1v1.4h-1.1zM724.25 -0.7h1.1v1.4h-1.1zM731.50 -0.7h1.1v1.4h-1.1zM738.75 -0.7h1.1v1.4h-1.1zM746.00 -0.7h1.1v1.4h-1.1zM753.25 -0.7h1.1v1.4h-1.1zM760.50 -0.7h1.1v1.4h-1.1zM767.75 -0.7h1.1v1.4h-1.1zM775.00 -0.7h1.1v1.4h-1.1zM782.25 -0.7h1.1v1.4h-1.1zM789.50 -0.7h1.1v1.4h-1.1zM796.75 -0.7h1.1v1.4h-1.1zM804.00 -0.7h1.1v1.4h-1.1zM811.25 -0.7h1.1v1.4h-1.1zM818.50 -0.7h1.1v1.4h-1.1zM825.75 -0.7h1.1v1.4h-1.1zM833.00 -0.7h1.1v1.4h-1.1zM840.25 -0.7h1.1v1.4h-1.1zM847.50 -0.7h1.1v1.4h-1.1zM854.75 -0.7h1.1v1.4h-1.1zM862.00 -0.7h1.1v1.4h-1.1zM869.25 -0.7h1.1v1.4h-1.1zM876.50 -0.7h1.1v1.4h-1.1zM883.75 -0.7h1.1v1.4h-1.1zM891.00 -0.7h1.1v1.4h-1.1zM898.25 -0.7h1.1v1.4h-1.1zM905.50 -0.7h1.1v1.4h-1.1zM912.75 -0.7h1.1v1.4h-1.1zM920.00 -0.7h1.1v1.4h-1.1zM927.25 -0.7h1.1v1.4h-1.1zM934.50 -0.7h1.1v1.4h-1.1zM941.75 -0.7h1.1v1.4h-1.1zM949.00 -0.7h1.1v1.4h-1.1zM956.25 -0.7h1.1v1.4h-1.1zM963.50 -0.7h1.1v1.4h-1.1zM970.75 -0.7h1.1v1.4h-1.1zM978.00 -0.7h1.1v1.4h-1.1zM985.25 -0.7h1.1v1.4h-1.1zM992.50 -0.7h1.1v1.4h-1.1zM999.75 -0.7h1.1v1.4h-1.1zM1007.00 -0.7h1.1v1.4h-1.1zM1014.25 -0.7h1.1v1.4h-1.1zM1021.50 -0.7h1.1v1.4h-1.1z" fill="#d8d8d8"/></defs>
<use href="#row" y="163.20"/>
<use href="#row" y="173.17"/>
<use href="#row" y="183.14"/>
<use href="#row" y="193.11"/>
<use href="#row" y="203.08"/>
<use href="#row" y="213.05"/>
<use href="#row" y="223.02"/>
<use href="#row" y="232.99"/>
<use href="#row" y="242.96"/>
<use href="#row" y="252.93"/>
<use href="#row" y="262.90"/>
<use href="#row" y="272.87"/>
<use href="#row" y="282.84"/>
<use href="#row" y="292.81"/>
<use href="#row" y="302.78"/>
<use href="#row" y="312.75"/>
<use href="#row" y="322.72"/>
<use href="#row" y="332.69"/>
<use href="#row" y="342.66"/>
<use href="#row" y="352.63"/>
<use href="#row" y="362.60"/>
<use href="#row" y="372.57"/>
<use href="#row" y="382.54"/>
<use href="#row" y="392.51"/>
<use href="#row" y="402.48"/>
<use href="#row" y="412.45"/>
<use href="#row" y="422.42"/>
<use href="#row" y="432.39"/>
<use href="#row" y="442.36"/>
<use href="#row" y="452.33"/>
<use href="#row" y="462.30"/>
<use href="#row" y="472.27"/>
<use href="#row" y="482.24"/>
<use href="#row" y="492.21"/>
<use href="#row" y="502.18"/>
<use href="#row" y="512.15"/>
<use href="#row" y="522.12"/>
<use href="#row" y="532.09"/>
<use href="#row" y="542.06"/>
<use href="#row" y="552.03"/>
<use href="#row" y="562.00"/>
<use href="#row" y="571.97"/>
<use href="#row" y="581.94"/>
<use href="#row" y="591.91"/>
<use href="#row" y="601.88"/>
<use href="#row" y="611.85"/>
<use href="#row" y="621.82"/>
<use href="#row" y="631.79"/>
<use href="#row" y="641.76"/>
<use href="#row" y="651.73"/>
<use href="#row" y="661.70"/>
<use href="#row" y="671.67"/>
<use href="#row" y="681.64"/>
<use href="#row" y="691.61"/>
<use href="#row" y="701.58"/>
<path d="M237.50 162.00h3v2.4h-3zM237.50 261.70h3v2.4h-3zM237.50 361.40h3v2.4h-3zM237.50 461.10h3v2.4h-3zM237.50 560.80h3v2.4h-3zM237.50 660.50h3v2.4h-3zM310.00 162.00h3v2.4h-3zM310.00 261.70h3v2.4h-3zM310.00 361.40h3v2.4h-3zM310.00 461.10h3v2.4h-3zM310.00 560.80h3v2.4h-3zM310.00 660.50h3v2.4h-3zM382.50 162.00h3v2.4h-3zM382.50 261.70h3v2.4h-3zM382.50 361.40h3v2.4h-3zM382.50 461.10h3v2.4h-3zM382.50 560.80h3v2.4h-3zM382.50 660.50h3v2.4h-3zM455.00 162.00h3v2.4h-3zM455.00 261.70h3v2.4h-3zM455.00 361.40h3v2.4h-3zM455.00 461.10h3v2.4h-3zM455.00 560.80h3v2.4h-3zM455.00 660.50h3v2.4h-3zM527.50 162.00h3v2.4h-3zM527.50 261.70h3v2.4h-3zM527.50 361.40h3v2.4h-3zM527.50 461.10h3v2.4h-3zM527.50 560.80h3v2.4h-3zM527.50 660.50h3v2.4h-3zM600.00 162.00h3v2.4h-3zM600.00 261.70h3v2.4h-3zM600.00 361.40h3v2.4h-3zM600.00 461.10h3v2.4h-3zM600.00 560.80h3v2.4h-3zM600.00 660.50h3v2.4h-3zM672.50 162.00h3v2.4h-3zM672.50 261.70h3v2.4h-3zM672.50 361.40h3v2.4h-3zM672.50 461.10h3v2.4h-3zM672.50 560.80h3v2.4h-3zM672.50 660.50h3v2.4h-3zM745.00 162.00h3v2.4h-3zM745.00 261.70h3v2.4h-3zM745.00 361.40h3v2.4h-3zM745.00 461.10h3v2.4h-3zM745.00 560.80h3v2.4h-3zM745.00 660.50h3v2.4h-3zM817.50 162.00h3v2.4h-3zM817.50 261.70h3v2.4h-3zM817.50 361.40h3v2.4h-3zM817.50 461.10h3v2.4h-3zM817.50 560.80h3v2.4h-3zM817.50 660.50h3v2.4h-3zM890.00 162.00h3v2.4h-3zM890.00 261.70h3v2.4h-3zM890.00 361.40h3v2.4h-3zM890.00 461.10h3v2.4h-3zM890.00 560.80h3v2.4h-3zM890.00 660.50h3v2.4h-3zM962.50 162.00h3v2.4h-3zM962.50 261.70h3v2.4h-3zM962.50 361.40h3v2.4h-3zM962.50 461.10h3v2.4h-3zM962.50 560.80h3v2.4h-3zM962.50 660.50h3v2.4h-3z" fill="#fff"/>
<polyline points="528.5,155 528.5,173" fill="none" stroke="#f0f0f0" stroke-width="1.2"/>
<polyline points="521,163.2 537,163.2" fill="none" stroke="#f0f0f0" stroke-width="1.6"/>
<polyline points="579.3,682.5 579.3,182.7 674.3,182.7 674.3,252.5" fill="none" stroke="#1e9ad6" stroke-width="1.3"/>
<polyline points="674.3,642 674.3,682.5 579.3,682.5" fill="none" stroke="#1e9ad6" stroke-width="1.3"/>
<ellipse cx="427.2" cy="343" rx="14.5" ry="20" fill="none" stroke="#1fa34a" stroke-width="1.3"/>
<polyline points="427.2,313 427.2,323" fill="none" stroke="#1fa34a" stroke-width="1.3"/>
<polyline points="427.2,363 427.2,373" fill="none" stroke="#1fa34a" stroke-width="1.3"/>
<text x="427.2" y="333" fill="#e0141a" font-family="Liberation Mono" font-size="7" font-weight="bold" text-anchor="middle" >+</text>
<text x="427.2" y="357" fill="#e0141a" font-family="Liberation Mono" font-size="7" font-weight="bold" text-anchor="middle" >-</text>
<text x="427.2" y="346" fill="#c8c8c8" font-family="Liberation Mono" font-size="8" font-weight="normal" text-anchor="middle" >5.0v</text>
<polyline points="427.2,373 427.2,388" fill="none" stroke="#1fa34a" stroke-width="1.3"/>
<polyline points="416.2,388 438.2,388" fill="none" stroke="#1fa34a" stroke-width="2.2"/>
<polyline points="421.7,395 432.7,395" fill="none" stroke="#1fa34a" stroke-width="1.6"/>
<polyline points="425.2,402 429.2,402" fill="none" stroke="#1fa34a" stroke-width="1.6"/>
<text x="410" y="346" fill="#d8c000" font-family="Liberation Mono" font-size="7.5" font-weight="bold" text-anchor="end" >VoltageSource_1</text>
<polyline points="427.2,313 427.2,286" fill="none" stroke="#1fa34a" stroke-width="1.3"/>
<polyline points="414.2,297 440.2,276" fill="none" stroke="#1fa34a" stroke-width="2.6"/>
<ellipse cx="434.7" cy="502.7" rx="14.5" ry="20" fill="none" stroke="#1fa34a" stroke-width="1.3"/>
<polyline points="434.7,472.7 434.7,482.7" fill="none" stroke="#1fa34a" stroke-width="1.3"/>
<polyline points="434.7,522.7 434.7,532.7" fill="none" stroke="#1fa34a" stroke-width="1.3"/>
<text x="434.7" y="492.7" fill="#e0141a" font-family="Liberation Mono" font-size="7" font-weight="bold" text-anchor="middle" >+</text>
<text x="434.7" y="516.7" fill="#e0141a" font-family="Liberation Mono" font-size="7" font-weight="bold" text-anchor="middle" >-</text>
<text x="434.7" y="505.7" fill="#c8c8c8" font-family="Liberation Mono" font-size="8" font-weight="normal" text-anchor="middle" >5.0v</text>
<polyline points="434.7,532.7 434.7,547.7" fill="none" stroke="#1fa34a" stroke-width="1.3"/>
<polyline points="423.7,547.7 445.7,547.7" fill="none" stroke="#1fa34a" stroke-width="2.2"/>
<polyline points="429.2,554.7 440.2,554.7" fill="none" stroke="#1fa34a" stroke-width="1.6"/>
<polyline points="432.7,561.7 436.7,561.7" fill="none" stroke="#1fa34a" stroke-width="1.6"/>
<text x="417" y="505.7" fill="#d8c000" font-family="Liberation Mono" font-size="7.5" font-weight="bold" text-anchor="end" >VoltageSource_2</text>
<ellipse cx="630" cy="353" rx="14.5" ry="20" fill="none" stroke="#1fa34a" stroke-width="1.3"/>
<polyline points="630,323 630,333" fill="none" stroke="#1fa34a" stroke-width="1.3"/>
<polyline points="630,373 630,383" fill="none" stroke="#1fa34a" stroke-width="1.3"/>
<text x="630" y="343" fill="#e0141a" font-family="Liberation Mono" font-size="7" font-weight="bold" text-anchor="middle" >+</text>
<text x="630" y="367" fill="#e0141a" font-family="Liberation Mono" font-size="7" font-weight="bold" text-anchor="middle" >-</text>
<text x="630" y="356" fill="#c8c8c8" font-family="Liberation Mono" font-size="8" font-weight="normal" text-anchor="middle" >5.0v</text>
<polyline points="630,383 630,398" fill="none" stroke="#1fa34a" stroke-width="1.3"/>
<polyline points="619,398 641,398" fill="none" stroke="#1fa34a" stroke-width="2.2"/>
<polyline points="624.5,405 635.5,405" fill="none" stroke="#1fa34a" stroke-width="1.6"/>
<polyline points="628,412 632,412" fill="none" stroke="#1fa34a" stroke-width="1.6"/>
<text x="614" y="356" fill="#d8c000" font-family="Liberation Mono" font-size="7.5" font-weight="bold" text-anchor="end" >VoltageSource_3</text>
<polyline points="434.7,472.7 434.7,452.5 507,452.5" fill="none" stroke="#1e9ad6" stroke-width="1.3"/>
<polyline points="470.7,313.3 470.7,427" fill="none" stroke="#1e9ad6" stroke-width="1.3"/>
<polyline points="470.7,313.3 609,313.3 609,452.5 674.3,452.5 674.3,483" fill="none" stroke="#1e9ad6" stroke-width="1.3"/>
<path d="M467.5 427h7v15l-3.5 5l-3.5-5z" fill="none" stroke="#d030d0" stroke-width="1.2"/>
<text x="473" y="406" fill="#d030d0" font-family="Liberation Mono" font-size="6.5" font-weight="bold" text-anchor="start" transform="rotate(90 473 406)">Vin</text>
<polyline points="471,452.5 478,463" fill="none" stroke="#1fa34a" stroke-width="1.3"/>
<rect x="478" y="463" width="101" height="19" fill="none" stroke="#1fa34a" stroke-width="1.3"/>
<text x="528.5" y="475.5" fill="#e0141a" font-family="Liberation Mono" font-size="8" font-weight="bold" text-anchor="middle" >Print Voltage</text>
<polyline points="543,300 543,362.7" fill="none" stroke="#1fa34a" stroke-width="1.3"/>
<polyline points="530,311 556,290" fill="none" stroke="#1fa34a" stroke-width="2.6"/>
<polyline points="536,362.7 551,362.7 551,422.7 536,422.7" fill="none" stroke="#1e9ad6" stroke-width="1.3"/>
<polyline points="536,362.7 536,392.4" fill="none" stroke="#1e9ad6" stroke-width="1.3"/>
<polyline points="536,392.4 536,407 525,407 525,438 536,438 536,452.6" fill="none" stroke="#1fa34a" stroke-width="1.3"/>
<polyline points="521,407 521,438" fill="none" stroke="#1fa34a" stroke-width="1.3"/>
<ellipse cx="516.5" cy="422.7" rx="3.5" ry="4.5" fill="none" stroke="#1fa34a" stroke-width="1.3"/>
<polyline points="507,422.7 513,422.7" fill="none" stroke="#1fa34a" stroke-width="1.3"/>
<polyline points="525,422.7 536,422.7" fill="none" stroke="#1fa34a" stroke-width="1.3"/>
<polyline points="536,452.6 536,502.6" fill="none" stroke="#1e9ad6" stroke-width="1.3"/>
<polyline points="507,422.7 507,532.6" fill="none" stroke="#1e9ad6" stroke-width="1.3"/>
<polyline points="536,463 580,463" fill="none" stroke="#1e9ad6" stroke-width="1.3"/>
<path d="M527 407l5-3v6z" fill="none" stroke="#1fa34a" stroke-width="1.1"/>
<text x="493" y="410" fill="#d8c000" font-family="Liberation Mono" font-size="7.5" font-weight="bold" text-anchor="start" >PMOS_1</text>
<text x="540" y="400.0" fill="#c8c8c8" font-family="Liberation Mono" font-size="7.5" font-weight="normal" text-anchor="start" >M = 1</text>
<text x="540" y="409.5" fill="#c8c8c8" font-family="Liberation Mono" font-size="7.5" font-weight="normal" text-anchor="start" >W = 2.50u</text>
<text x="540" y="419.0" fill="#c8c8c8" font-family="Liberation Mono" font-size="7.5" font-weight="normal" text-anchor="start" >L = 0.25u</text>
<text x="540" y="439" fill="#c8c8c8" font-family="Liberation Mono" font-size="7.5" font-weight="normal" text-anchor="start" >MF = 1</text>
<polyline points="536,502.6 536,518 525,518 525,548 536,548 536,562.7" fill="none" stroke="#1fa34a" stroke-width="1.3"/>
<polyline points="521,518 521,549" fill="none" stroke="#1fa34a" stroke-width="1.3"/>
<polyline points="507,532.6 521,532.6" fill="none" stroke="#1fa34a" stroke-width="1.3"/>
<polyline points="525,532.6 536,532.6" fill="none" stroke="#1fa34a" stroke-width="1.3"/>
<polyline points="536,532.6 551,532.6 551,582.6 536,582.6 536,562.7" fill="none" stroke="#1e9ad6" stroke-width="1.3"/>
<polyline points="543,582.6 543,597" fill="none" stroke="#1fa34a" stroke-width="1.3"/>
<polyline points="532,597.3 553,597.3" fill="none" stroke="#1fa34a" stroke-width="2.2"/>
<polyline points="538,605 548,605" fill="none" stroke="#1fa34a" stroke-width="1.6"/>
<polyline points="541,612 545,612" fill="none" stroke="#1fa34a" stroke-width="1.6"/>
<path d="M526 548l5-3v6z" fill="none" stroke="#1fa34a" stroke-width="1.1"/>
<text x="493" y="521" fill="#d8c000" font-family="Liberation Mono" font-size="7.5" font-weight="bold" text-anchor="start" >NMOS_1</text>
<text x="540" y="511.0" fill="#c8c8c8" font-family="Liberation Mono" font-size="7.5" font-weight="normal" text-anchor="start" >M = 1</text>
<text x="540" y="520.5" fill="#c8c8c8" font-family="Liberation Mono" font-size="7.5" font-weight="normal" text-anchor="start" >W = 2.50u</text>
<text x="540" y="530.0" fill="#c8c8c8" font-family="Liberation Mono" font-size="7.5" font-weight="normal" text-anchor="start" >L = 0.25u</text>
<text x="540" y="550" fill="#c8c8c8" font-family="Liberation Mono" font-size="7.5" font-weight="normal" text-anchor="start" >MF = 1</text>
<ellipse cx="674.3" cy="268.0" rx="4.5" ry="4.2" fill="none" stroke="#1fa34a" stroke-width="1.3"/>
<polyline points="662.3,273.0 686.3,273.0" fill="none" stroke="#1fa34a" stroke-width="1.3"/>
<polyline points="663.3,278.0 685.3,278.0" fill="none" stroke="#1fa34a" stroke-width="1.3"/>
<polyline points="652.3,293.0 663.3,293.0 663.3,278.0" fill="none" stroke="#1fa34a" stroke-width="1.3"/>
<polyline points="696.3,293.0 685.3,293.0 685.3,278.0" fill="none" stroke="#1fa34a" stroke-width="1.3"/>
<polyline points="674.3,278.0 674.3,373.0" fill="none" stroke="#1fa34a" stroke-width="1.3"/>
<polyline points="652.3,293.0 652.3,373.0" fill="none" stroke="#1e9ad6" stroke-width="1.3"/>
<polyline points="696.3,293.0 696.3,373.0" fill="none" stroke="#1e9ad6" stroke-width="1.3"/>
<polyline points="652.3,373.0 663.3,373.0 663.3,388.0 685.3,388.0 685.3,373.0 696.3,373.0" fill="none" stroke="#1fa34a" stroke-width="1.3"/>
<polyline points="662.3,393.5 686.3,393.5" fill="none" stroke="#1fa34a" stroke-width="1.3"/>
<path d="M684.3 281.5l-3 6h6z" fill="none" stroke="#1fa34a" stroke-width="1.1"/>
<path d="M684.3 378.5l-3 6h6z" fill="none" stroke="#1fa34a" stroke-width="1.1"/>
<polyline points="674.3,393.5 674.3,412.5" fill="none" stroke="#1fa34a" stroke-width="1.3"/>
<polyline points="662.3,330.5 687.3,308.5" fill="none" stroke="#1fa34a" stroke-width="1.8"/>
<text x="664.3" y="296.5" fill="#c8c8c8" font-family="Liberation Mono" font-size="6.5" font-weight="normal" text-anchor="start" transform="rotate(90 664.3 296.5)">M=1W</text>
<text x="676.3" y="296.5" fill="#c8c8c8" font-family="Liberation Mono" font-size="6.5" font-weight="normal" text-anchor="start" transform="rotate(90 676.3 296.5)">L=0</text>
<text x="686.3" y="296.5" fill="#c8c8c8" font-family="Liberation Mono" font-size="6.5" font-weight="normal" text-anchor="start" transform="rotate(90 686.3 296.5)">M</text>
<text x="664.3" y="336.5" fill="#c8c8c8" font-family="Liberation Mono" font-size="6.5" font-weight="normal" text-anchor="start" transform="rotate(90 664.3 336.5)">W=2</text>
<text x="678.3" y="336.5" fill="#c8c8c8" font-family="Liberation Mono" font-size="6.5" font-weight="normal" text-anchor="start" transform="rotate(90 678.3 336.5)">MF</text>
<text x="658.3" y="348.5" fill="#c8c8c8" font-family="Liberation Mono" font-size="6.5" font-weight="normal" text-anchor="start" transform="rotate(90 658.3 348.5)">L=0.25u</text>
<text x="685.3" y="239.5" fill="#d8c000" font-family="Liberation Mono" font-size="6.5" font-weight="bold" text-anchor="start" transform="rotate(90 685.3 239.5)">PMOS_2</text>
<text x="665.3" y="394.5" fill="#d8c000" font-family="Liberation Mono" font-size="6.5" font-weight="bold" text-anchor="start" transform="rotate(90 665.3 394.5)">NMOS_2</text>
<ellipse cx="674.3" cy="498.1" rx="4.5" ry="4.2" fill="none" stroke="#1fa34a" stroke-width="1.3"/>
<polyline points="662.3,503.1 686.3,503.1" fill="none" stroke="#1fa34a" stroke-width="1.3"/>
<polyline points="663.3,508.1 685.3,508.1" fill="none" stroke="#1fa34a" stroke-width="1.3"/>
<polyline points="652.3,523.1 663.3,523.1 663.3,508.1" fill="none" stroke="#1fa34a" stroke-width="1.3"/>
<polyline points="696.3,523.1 685.3,523.1 685.3,508.1" fill="none" stroke="#1fa34a" stroke-width="1.3"/>
<polyline points="674.3,508.1 674.3,603.1" fill="none" stroke="#1fa34a" stroke-width="1.3"/>
<polyline points="652.3,523.1 652.3,603.1" fill="none" stroke="#1e9ad6" stroke-width="1.3"/>
<polyline points="696.3,523.1 696.3,603.1" fill="none" stroke="#1e9ad6" stroke-width="1.3"/>
<polyline points="652.3,603.1 663.3,603.1 663.3,618.1 685.3,618.1 685.3,603.1 696.3,603.1" fill="none" stroke="#1fa34a" stroke-width="1.3"/>
<polyline points="662.3,623.6 686.3,623.6" fill="none" stroke="#1fa34a" stroke-width="1.3"/>
<path d="M684.3 511.6l-3 6h6z" fill="none" stroke="#1fa34a" stroke-width="1.1"/>
<path d="M684.3 608.6l-3 6h6z" fill="none" stroke="#1fa34a" stroke-width="1.1"/>
<polyline points="674.3,623.6 674.3,642.6" fill="none" stroke="#1fa34a" stroke-width="1.3"/>
<polyline points="662.3,560.6 687.3,538.6" fill="none" stroke="#1fa34a" stroke-width="1.8"/>
<text x="664.3" y="526.6" fill="#c8c8c8" font-family="Liberation Mono" font-size="6.5" font-weight="normal" text-anchor="start" transform="rotate(90 664.3 526.6)">M=1W</text>
<text x="676.3" y="526.6" fill="#c8c8c8" font-family="Liberation Mono" font-size="6.5" font-weight="normal" text-anchor="start" transform="rotate(90 676.3 526.6)">L=0</text>
<text x="686.3" y="526.6" fill="#c8c8c8" font-family="Liberation Mono" font-size="6.5" font-weight="normal" text-anchor="start" transform="rotate(90 686.3 526.6)">M</text>
<text x="664.3" y="566.6" fill="#c8c8c8" font-family="Liberation Mono" font-size="6.5" font-weight="normal" text-anchor="start" transform="rotate(90 664.3 566.6)">W=2</text>
<text x="678.3" y="566.6" fill="#c8c8c8" font-family="Liberation Mono" font-size="6.5" font-weight="normal" text-anchor="start" transform="rotate(90 678.3 566.6)">MF</text>
<text x="658.3" y="578.6" fill="#c8c8c8" font-family="Liberation Mono" font-size="6.5" font-weight="normal" text-anchor="start" transform="rotate(90 658.3 578.6)">L=0.25u</text>
<text x="685.3" y="469.6" fill="#d8c000" font-family="Liberation Mono" font-size="6.5" font-weight="bold" text-anchor="start" transform="rotate(90 685.3 469.6)">PMOS_2</text>
<text x="665.3" y="624.6" fill="#d8c000" font-family="Liberation Mono" font-size="6.5" font-weight="bold" text-anchor="start" transform="rotate(90 665.3 624.6)">NMOS_2</text>
<polyline points="630,323 753.4,323 753.4,443" fill="none" stroke="#1e9ad6" stroke-width="1.3"/>
<path d="M641.5 300h7v15l-3.5 5l-3.5-5z" fill="none" stroke="#d030d0" stroke-width="1.2"/>
<text x="647" y="285" fill="#d030d0" font-family="Liberation Mono" font-size="6.5" font-weight="bold" text-anchor="start" transform="rotate(-90 647 299)">Vin</text>
<polyline points="645,323 652,333" fill="none" stroke="#1fa34a" stroke-width="1.3"/>
<rect x="652" y="333" width="101" height="20" fill="none" stroke="#1fa34a" stroke-width="1.3"/>
<text x="702.5" y="346.0" fill="#e0141a" font-family="Liberation Mono" font-size="8" font-weight="bold" text-anchor="middle" >Print Voltage</text>
<polyline points="608.4,313.3 608.4,313.3" fill="none" stroke="#1e9ad6" stroke-width="1.3"/>
<polyline points="622,583 622,542.6 652,542.6" fill="none" stroke="#1e9ad6" stroke-width="1.3"/>
<text x="632" y="500" fill="#d030d0" font-family="Liberation Mono" font-size="6.5" font-weight="bold" text-anchor="start" transform="rotate(90 632 500)">Vin</text>
<path d="M626.5 518h7v18l-3.5 6l-3.5-6z" fill="none" stroke="#d030d0" stroke-width="1.2"/>
<polyline points="622,583 622,597" fill="none" stroke="#1fa34a" stroke-width="1.3"/>
<polyline points="612,597 633,597" fill="none" stroke="#1fa34a" stroke-width="2.2"/>
<polyline points="617,605 628,605" fill="none" stroke="#1fa34a" stroke-width="1.6"/>
<polyline points="620,611 624,611" fill="none" stroke="#1fa34a" stroke-width="1.6"/>
<polyline points="630,542.6 638,552" fill="none" stroke="#1fa34a" stroke-width="1.3"/>
<rect x="638" y="552" width="101.70000000000005" height="20" fill="none" stroke="#1fa34a" stroke-width="1.3"/>
<text x="688.85" y="565.0" fill="#e0141a" font-family="Liberation Mono" font-size="8" font-weight="bold" text-anchor="middle" >Print Voltage</text>
<polyline points="696.3,583 753.4,583 753.4,443" fill="none" stroke="#1e9ad6" stroke-width="1.3"/>
<path d="M756 439.5h13a3.5 3.5 0 0 1 0 7h-13z" fill="none" stroke="#d030d0" stroke-width="1.2"/>
<text x="773" y="446" fill="#d030d0" font-family="Liberation Mono" font-size="7.5" font-weight="bold" text-anchor="start" >Out</text>
<polyline points="753.4,443 760.5,452.4" fill="none" stroke="#1fa34a" stroke-width="1.3"/>
<rect x="760.5" y="452.4" width="101.10000000000002" height="20.200000000000045" fill="none" stroke="#1fa34a" stroke-width="1.3"/>
<text x="811.05" y="465.5" fill="#e0141a" font-family="Liberation Mono" font-size="8" font-weight="bold" text-anchor="middle" >Print Voltage</text>
<rect x="424.59999999999997" y="310.4" width="5.2" height="5.2" fill="#e0141a"/>
<rect x="424.59999999999997" y="370.4" width="5.2" height="5.2" fill="#e0141a"/>
<rect x="432.09999999999997" y="470.09999999999997" width="5.2" height="5.2" fill="#e0141a"/>
<rect x="432.09999999999997" y="530.1" width="5.2" height="5.2" fill="#e0141a"/>
<rect x="627.4" y="320.4" width="5.2" height="5.2" fill="#e0141a"/>
<rect x="627.4" y="380.4" width="5.2" height="5.2" fill="#e0141a"/>
<rect x="468.4" y="449.9" width="5.2" height="5.2" fill="#e0141a"/>
<rect x="540.4" y="360.09999999999997" width="5.2" height="5.2" fill="#e0141a"/>
<rect x="533.4" y="389.79999999999995" width="5.2" height="5.2" fill="#e0141a"/>
<rect x="533.4" y="420.09999999999997" width="5.2" height="5.2" fill="#e0141a"/>
<rect x="533.4" y="450.0" width="5.2" height="5.2" fill="#e0141a"/>
<rect x="504.4" y="420.09999999999997" width="5.2" height="5.2" fill="#e0141a"/>
<rect x="533.4" y="500.0" width="5.2" height="5.2" fill="#e0141a"/>
<rect x="504.4" y="530.0" width="5.2" height="5.2" fill="#e0141a"/>
<rect x="533.4" y="530.0" width="5.2" height="5.2" fill="#e0141a"/>
<rect x="533.4" y="560.1" width="5.2" height="5.2" fill="#e0141a"/>
<rect x="540.4" y="580.0" width="5.2" height="5.2" fill="#e0141a"/>
<rect x="671.6999999999999" y="249.9" width="5.2" height="5.2" fill="#e0141a"/>
<rect x="649.6999999999999" y="290.4" width="5.2" height="5.2" fill="#e0141a"/>
<rect x="649.6999999999999" y="370.4" width="5.2" height="5.2" fill="#e0141a"/>
<rect x="671.6999999999999" y="290.4" width="5.2" height="5.2" fill="#e0141a"/>
<rect x="671.6999999999999" y="370.4" width="5.2" height="5.2" fill="#e0141a"/>
<rect x="693.6999999999999" y="290.4" width="5.2" height="5.2" fill="#e0141a"/>
<rect x="693.6999999999999" y="370.4" width="5.2" height="5.2" fill="#e0141a"/>
<rect x="671.6999999999999" y="409.9" width="5.2" height="5.2" fill="#e0141a"/>
<rect x="671.6999999999999" y="480.0" width="5.2" height="5.2" fill="#e0141a"/>
<rect x="649.6999999999999" y="520.5" width="5.2" height="5.2" fill="#e0141a"/>
<rect x="649.6999999999999" y="600.5" width="5.2" height="5.2" fill="#e0141a"/>
<rect x="671.6999999999999" y="520.5" width="5.2" height="5.2" fill="#e0141a"/>
<rect x="671.6999999999999" y="600.5" width="5.2" height="5.2" fill="#e0141a"/>
<rect x="693.6999999999999" y="520.5" width="5.2" height="5.2" fill="#e0141a"/>
<rect x="693.6999999999999" y="600.5" width="5.2" height="5.2" fill="#e0141a"/>
<rect x="671.6999999999999" y="640.0" width="5.2" height="5.2" fill="#e0141a"/>
<rect x="642.4" y="320.4" width="5.2" height="5.2" fill="#e0141a"/>
<rect x="627.4" y="540.0" width="5.2" height="5.2" fill="#e0141a"/>
<rect x="619.4" y="580.4" width="5.2" height="5.2" fill="#e0141a"/>
<rect x="750.8" y="440.4" width="5.2" height="5.2" fill="#e0141a"/>
</g></svg>
<div class="t" style="left:401px;top:64.02px;font-size:19px;color:#e8d000;font-weight:bold;transform:scaleX(0.8);text-shadow:0 0 1px #555">?</div>
<div class="t" style="left:817px;top:65.91px;font-size:17px;color:#333;font-weight:normal;transform:scaleX(0.8);font-family:Liberation Serif">L</div>
<div class="t" style="left:961px;top:67.80px;font-size:15px;color:#333;font-weight:normal;transform:scaleX(0.8);font-family:Liberation Serif">N</div>
<div class="t" style="left:1087px;top:67.64px;font-size:12px;color:#999;font-weight:normal;transform:scaleX(0.8);font-family:Liberation Serif">P</div>
<div class="t" style="left:141px;top:96.09px;font-size:11px;color:#3a4af0;font-weight:bold;transform:scaleX(1.0);font-style:italic;font-family:Liberation Serif">T</div>
<div class="t" style="left:134.5px;top:97.53px;font-size:10px;color:#40a060;font-weight:bold;transform:scaleX(0.8);">$</div>
<div class="t" style="left:154px;top:104.59px;font-size:11px;color:#444;font-weight:bold;transform:scaleX(0.613300964671309);">V</div>
<div class="t" style="left:175px;top:104.59px;font-size:11px;color:#444;font-weight:bold;transform:scaleX(0.4908477349422231);">I</div>
<div class="t" style="left:193px;top:104.59px;font-size:11px;color:#444;font-weight:bold;transform:scaleX(0.7012673947185799);">Q</div>
<div class="t" style="left:212px;top:99.36px;font-size:16px;color:#454545;font-weight:bold;transform:scaleX(0.8125);font-family:Liberation Serif">IP</div>
<div style="position:absolute;left:229.5px;top:92.5px;width:88px;height:26.5px;background:#e4e6f1;border:1px solid #b4b7c4"></div>
<div style="position:absolute;left:303px;top:94px;width:13px;height:23px;background:#eceef4;border-left:1px solid #c8c8d0"></div>
<div class="t" style="left:573.5px;top:97.30px;font-size:15px;color:#1a1a1a;font-weight:normal;transform:scaleX(0.7095062754879835);">1.1 : -4.9</div>
<div style="position:absolute;left:621.5px;top:93.5px;width:88px;height:26px;background:#fff;border:1px solid #a0a0a8"></div>
<div class="t" style="left:624.5px;top:97.30px;font-size:15px;color:#111;font-weight:normal;transform:scaleX(0.7086882453151618);">inch</div>
<div style="position:absolute;left:695px;top:95px;width:13.5px;height:22.5px;background:linear-gradient(#f0f0f0,#c8c8c8);border:1px solid #888"></div>
<div style="position:absolute;left:758px;top:93.5px;width:75.5px;height:25.5px;background:linear-gradient(#dfe2f0,#d8dcee);border:1px solid #a8aab8;border-right-color:#f2f3f9;border-bottom-color:#f2f3f9"></div>
<div style="position:absolute;left:837.5px;top:93.5px;width:75.0px;height:25.5px;background:linear-gradient(#dfe2f0,#d8dcee);border:1px solid #a8aab8;border-right-color:#f2f3f9;border-bottom-color:#f2f3f9"></div>
<div style="position:absolute;left:916.5px;top:93.5px;width:75.0px;height:25.5px;background:linear-gradient(#dfe2f0,#d8dcee);border:1px solid #a8aab8;border-right-color:#f2f3f9;border-bottom-color:#f2f3f9"></div>
<div class="t" style="left:932px;top:98.63px;font-size:15.5px;color:#2a2a30;font-weight:normal;transform:scaleX(0.5499184669495182);">DESELECT</div>
<div class="t" style="left:1102px;top:191.48px;font-size:9px;color:#aaa;font-weight:normal;transform:scaleX(0.8);">a</div>
<div class="t" style="left:1106px;top:198.48px;font-size:9px;color:#aaa;font-weight:normal;transform:scaleX(0.8);">b</div>
<div class="t" style="left:1121px;top:191.48px;font-size:9px;color:#aaa;font-weight:normal;transform:scaleX(0.8);">a</div>
<div class="t" style="left:1125px;top:198.48px;font-size:9px;color:#aaa;font-weight:normal;transform:scaleX(0.8);">b</div>
<div class="t" style="left:1061px;top:222.43px;font-size:8px;color:#444;font-weight:normal;transform:scaleX(0.9);">A</div>
<div class="t" style="left:1066px;top:227.43px;font-size:8px;color:#444;font-weight:normal;transform:scaleX(0.9);">B</div>
<div class="t" style="left:1071px;top:232.43px;font-size:8px;color:#444;font-weight:normal;transform:scaleX(0.9);">C</div>
<svg width="1213" height="900" viewBox="0 0 1213 900" style="position:absolute;left:0;top:0">
<path d="M14.5 65.5h6.5l3 3v12.5h-9.5z" fill="#fff" stroke="#444" stroke-width="1.1" />
<path d="M33.5 65.5h6.5l3 3v12.5h-9.5z" fill="#fff" stroke="#444" stroke-width="1.1" />
<path d="M35.5 70l5 3.5l-5 3.5z" fill="none" stroke="#3838d0" stroke-width="1.1" />
<path d="M51.5 69.5h5l1.5 1.5h5v2" fill="none" stroke="#555" stroke-width="1" />
<path d="M51.5 70v10.5h10.5l3.5-8h-10.5l-3.5 8" fill="#d4cf30" stroke="#555" stroke-width="1" />
<path d="M51.5 80.5l3.5-8h10.5l-3.5 8z" fill="#8aa040" stroke="#555" stroke-width="1" />
<path d="M58 67q3-3 6 0" fill="none" stroke="#555" stroke-width="1" />
<path d="M71.5 65.5h11.5v15.5h-11.5z" fill="#7a9a48" stroke="#333" stroke-width="1.2" />
<path d="M74 66.5h6.5v6h-6.5z" fill="#e8e8e8" stroke="none" stroke-width="1" />
<path d="M74 75.5h7v5.5h-7z" fill="#333" stroke="none" stroke-width="1" />
<path d="M93.5 65.5h10.5v12h-10.5z" fill="#8a9a58" stroke="#333" stroke-width="1" />
<path d="M90.5 68.5h11.5v13h-11.5z" fill="#7a9a48" stroke="#333" stroke-width="1.2" />
<path d="M93 69.5h6.5v4.5h-6.5z" fill="#ddd" stroke="none" stroke-width="1" />
<path d="M93 77h7v4.5h-7z" fill="#333" stroke="none" stroke-width="1" />
<rect x="108.0" y="62" width="1" height="22" fill="#8d909c"/><rect x="109.0" y="62" width="1" height="22" fill="#f4f5fb"/>
<path d="M119 66l5 10M126 66l-5 10" fill="none" stroke="#aaa" stroke-width="1.2" />
<circle cx="120.5" cy="79.5" r="2.3" fill="none" stroke="#aaa" stroke-width="1.1"/><circle cx="125.5" cy="79.5" r="2.3" fill="none" stroke="#aaa" stroke-width="1.1"/>
<path d="M135.5 65.5h7v10h-7zM140.5 70.5h8v11h-8z" fill="#eee" stroke="#aaa" stroke-width="1.1" />
<path d="M154.5 66.5h11v15h-11z" fill="#a8a8a8" stroke="#999" stroke-width="1" />
<path d="M160.5 73.5h8v9h-8z" fill="#ddd" stroke="#999" stroke-width="1" />
<rect x="172.0" y="62" width="1" height="22" fill="#8d909c"/><rect x="173.0" y="62" width="1" height="22" fill="#f4f5fb"/>
<path d="M179.5 65.5h12.5v16h-12.5z" fill="#f0f0f8" stroke="#444" stroke-width="1.3" />
<path d="M180 66h12v2.5h-12z" fill="#555" stroke="none" stroke-width="1" />
<path d="M183 70.5l5.5 3.5l-5.5 3.5z" fill="none" stroke="#3a3ad0" stroke-width="1.2" />
<path d="M199.5 65.5h12.5v16h-12.5z" fill="#f0f0f8" stroke="#444" stroke-width="1.3" />
<path d="M200 66h12v2.5h-12z" fill="#555" stroke="none" stroke-width="1" />
<path d="M205.5 69.5l1.5 3h3l-2.5 2l1 3l-3-2l-3 2l1-3l-2.5-2h3z" fill="none" stroke="#3a3ad0" stroke-width="1.1" />
<rect x="216.5" y="62" width="1" height="22" fill="#8d909c"/><rect x="217.5" y="62" width="1" height="22" fill="#f4f5fb"/>
<path d="M225 74q1-6 6-6q5 0 5 6q0 4-3 6M224 71l1.5 3.5l3.5-1.5" fill="none" stroke="#aaa" stroke-width="1.2" />
<path d="M223 82.5h13" fill="none" stroke="#aaa" stroke-width="1.5" />
<path d="M254 74q-1-6-6-6q-5 0-5 6q0 4 3 6M255 71l-1.5 3.5l-3.5-1.5" fill="none" stroke="#aaa" stroke-width="1.2" />
<path d="M243 82.5h13" fill="none" stroke="#aaa" stroke-width="1.5" />
<rect x="261.0" y="62" width="1" height="22" fill="#8d909c"/><rect x="262.0" y="62" width="1" height="22" fill="#f4f5fb"/>
<path d="M268.5 74l5-5.5v3h7.5v5h-7.5v3z" fill="#5fc4f0" stroke="#2a6a70" stroke-width="1" />
<path d="M300 74l-5-5.5v3h-7.5v5h7.5v3z" fill="#a4a4a4" stroke="none" stroke-width="1" />
<path d="M311 65h5v8h3.5l-6 7l-6-7h3.5z" fill="#a4a4a4" stroke="none" stroke-width="1" />
<path d="M307.5 79v4h13v-4" fill="none" stroke="#aaa" stroke-width="1.3" />
<path d="M330.5 83v-9h-3.5l6-7.5l6 7.5h-3.5v9z" fill="#a4a4a4" stroke="none" stroke-width="1" />
<path d="M326.5 79v4h13v-4" fill="none" stroke="#aaa" stroke-width="1.3" />
<path d="M351 65.5h8v12h-8z" fill="#f0e040" stroke="#444" stroke-width="1" />
<path d="M347.5 70.5h7l2.5 2.5v10h-9.5z" fill="#fff" stroke="#444" stroke-width="1.1" />
<path d="M363.5 71.5h5.5l-2.75 3.3z" fill="#111" stroke="none" stroke-width="1" />
<rect x="374.0" y="62" width="1" height="22" fill="#8d909c"/><rect x="375.0" y="62" width="1" height="22" fill="#f4f5fb"/>
<path d="M383.5 66h9v5h-9z" fill="#ddd" stroke="#666" stroke-width="1" />
<path d="M380.5 71h14v8h-14z" fill="#9a9a9a" stroke="#555" stroke-width="1" />
<path d="M382.5 78h10v4h-10z" fill="#ccc" stroke="#666" stroke-width="1" />
<path d="M420 76l8-10l5.5 4l-8 10z" fill="#3a3af0" stroke="#333" stroke-width="1" />
<path d="M420 76v3l5.5 4v-3" fill="none" stroke="#6a6af0" stroke-width="1.2" />
<rect x="437.5" y="62" width="1" height="22" fill="#8d909c"/><rect x="438.5" y="62" width="1" height="22" fill="#f4f5fb"/>
<path d="M448 68h6l2 3v7l-2 3h-6l-2-3v-7z" fill="#a8a8a8" stroke="none" stroke-width="1" />
<path d="M465 79.5h5.5l-2.75 3.3z" fill="#111" stroke="none" stroke-width="1" />
<rect x="699.5" y="61.5" width="18" height="23" rx="3" fill="#c2c6da" stroke="#6f7280" stroke-width="1"/>
<path d="M706.5 65v14l3-3l2.5 5.5l1.5-.8l-2.5-5.3h4z" fill="#111" stroke="#111" stroke-width="0.6" />
<rect x="720.0" y="62" width="1" height="22" fill="#8d909c"/><rect x="721.0" y="62" width="1" height="22" fill="#f4f5fb"/>
<path d="M727.5 66.5h11.5v14h-11.5z" fill="#fff" stroke="#444" stroke-width="1.2" />
<path d="M747.5 66.5h5v6h6.5v8h-11.5z" fill="#fff" stroke="#444" stroke-width="1.2" />
<path d="M766 68h6v11h7" fill="none" stroke="#444" stroke-width="1.6" />
<rect x="783.5" y="62" width="1" height="22" fill="#8d909c"/><rect x="784.5" y="62" width="1" height="22" fill="#f4f5fb"/>
<ellipse cx="797.5" cy="73.5" rx="5.5" ry="7" fill="#fff" stroke="#444" stroke-width="1.2"/>
<rect x="809.0" y="62" width="1" height="22" fill="#8d909c"/><rect x="810.0" y="62" width="1" height="22" fill="#f4f5fb"/>
<rect x="833.5" y="62" width="1" height="22" fill="#8d909c"/><rect x="834.5" y="62" width="1" height="22" fill="#f4f5fb"/>
<path d="M845.5 65.5h8v9h-8z" fill="#f0e890" stroke="#666" stroke-width="1" />
<path d="M839.5 71.5h8v11h-8z" fill="#ddd" stroke="#555" stroke-width="1" />
<path d="M845 66l-5 7" fill="none" stroke="#4a4af0" stroke-width="1" />
<path d="M857.5 77.5h5l-2.5 3.0z" fill="#111" stroke="none" stroke-width="1" />
<path d="M882.5 67h10v14h-10zM881.5 67h12M881.5 81h12" fill="#ddd" stroke="#444" stroke-width="1.2" />
<path d="M885 71h5M885 74h5M885 77h5" fill="none" stroke="#666" stroke-width="1" />
<path d="M900 70.5h13M906.5 70.5v11" fill="none" stroke="#444" stroke-width="1.2" />
<circle cx="906.5" cy="70.5" r="2.6" fill="#222"/>
<ellipse cx="923" cy="76" rx="1.8" ry="2.5" fill="none" stroke="#444" stroke-width="1"/><ellipse cx="930" cy="71" rx="1.8" ry="2.5" fill="none" stroke="#444" stroke-width="1"/>
<path d="M923 78.5v4M930 65v3.5" fill="none" stroke="#444" stroke-width="1" />
<path d="M942 67h6l3 3v6l-3 3h-6l-3-3v-6z" fill="#f05050" stroke="#888" stroke-width="1" />
<circle cx="961.5" cy="74" r="2" fill="#30c0e0" stroke="#333" stroke-width="1"/>
<path d="M961 66h3M961 82h5" fill="none" stroke="#444" stroke-width="1" />
<rect x="976.5" y="62" width="1" height="22" fill="#8d909c"/><rect x="977.5" y="62" width="1" height="22" fill="#f4f5fb"/>
<path d="M984.5 68.5h8l4.5 6l-4.5 6h-8z" fill="#fff" stroke="#555" stroke-width="1.1" />
<path d="M1004.5 68.5h8l4.5 6l-4.5 6h-8zM1001 74.5h3.5" fill="#fff" stroke="#555" stroke-width="1.1" />
<path d="M1025 68.5h8l4 6l-4 6h-8l-4-6z" fill="#fff" stroke="#555" stroke-width="1.1" />
<path d="M1044.5 68.5h10v12h-10zM1041 74.5h3.5" fill="#fff" stroke="#555" stroke-width="1.1" />
<path d="M1064.5 68.5h10v12h-10zM1066.5 71.5h6v6h-6zM1061 74.5h3.5" fill="#ddd" stroke="#666" stroke-width="1.1" />
<rect x="1079.5" y="62" width="1" height="22" fill="#8d909c"/><rect x="1080.5" y="62" width="1" height="22" fill="#f4f5fb"/>
<path d="M1093 82l5-14l2 1l-5 14z" fill="#ddd" stroke="#aaa" stroke-width="1" />
<path d="M1104.5 78h5l-2.5 3.0z" fill="#111" stroke="none" stroke-width="1" />
<rect x="1123.5" y="61.5" width="19.5" height="23" rx="3" fill="#c2c6da" stroke="#6f7280" stroke-width="1"/>
<path d="M1126 67.5h6.5M1132.5 67.5v12.5M1132.5 79.5h7" fill="none" stroke="#111" stroke-width="1.6" />
<path d="M1132.5 68v12" fill="none" stroke="#e00" stroke-width="1.8" />
<path d="M1148 69h8.5v12" fill="none" stroke="#f04040" stroke-width="2.2" />
<circle cx="1148" cy="69" r="2" fill="#333"/><circle cx="1156.5" cy="81" r="2" fill="#333"/>
<path d="M1166 67.5l11 12.5" fill="none" stroke="#f04040" stroke-width="2.2" />
<path d="M1190 66l-4 4l12 8l-6 4" fill="none" stroke="#f04040" stroke-width="2.2" />
<path d="M1203.5 78h5l-2.5 3.0z" fill="#111" stroke="none" stroke-width="1" />
<path d="M11.5 106l4 6l8-13" fill="none" stroke="#f03030" stroke-width="2.6" />
<path d="M16 110l2 4l6-12" fill="none" stroke="#c04060" stroke-width="1.8" />
<path d="M32.5 107l3.5 5.5l8-12" fill="none" stroke="#f03030" stroke-width="2.6" />
<path d="M57 99.5v15M52 105.5h11M52 105.5v4.5M63 105.5v8" fill="none" stroke="#f0ec40" stroke-width="4.2" />
<path d="M57 99.5v15M52 105.5h11M52 105.5v4.5M63 105.5v8" fill="none" stroke="#3a50a8" stroke-width="1.6" />
<circle cx="57" cy="100" r="1.8" fill="#3a50a8"/><circle cx="52" cy="110" r="1.8" fill="#3a50a8"/><circle cx="63" cy="113.5" r="1.8" fill="#3a50a8"/><circle cx="57" cy="114" r="1.6" fill="#3a50a8"/>
<rect x="69.0" y="94" width="1" height="25" fill="#8d909c"/><rect x="70.0" y="94" width="1" height="25" fill="#f4f5fb"/>
<path d="M77.5 102.5l8.5 11.5" fill="none" stroke="#555" stroke-width="2.2" />
<path d="M75.5 104q-1-4 3-5l-1 3l2 1l2-2q1 4-3 5" fill="#555" stroke="#555" stroke-width="0.8" />
<path d="M77.5 114l9-12" fill="none" stroke="#6a5040" stroke-width="2" />
<path d="M83 101l4-3l3 3l-3 3z" fill="#5a7a40" stroke="#444" stroke-width="1" />
<path d="M98.5 100.5v13.5l8.5-6.75z" fill="#40b040" stroke="none" stroke-width="1" />
<rect x="117" y="100" width="9.5" height="14.5" fill="#a4a4a4"/>
<path d="M137 114.5l3-3.5l2.5 2.5l3.5-3.5" fill="none" stroke="#f020f0" stroke-width="1.2" />
<path d="M156.5 98l4 5" fill="none" stroke="#444" stroke-width="1" />
<path d="M160 103.5l2.5-2l6 8.5l-2.5 3z" fill="#4a4a4a" stroke="#444" stroke-width="1.5" />
<path d="M162 104.5l4.5 6.5" fill="none" stroke="#4a4af0" stroke-width="1" />
<path d="M177.5 98l4 5" fill="none" stroke="#444" stroke-width="1" />
<path d="M181 103.5l2.5-2l6 8.5l-2.5 3z" fill="#4a4a4a" stroke="#444" stroke-width="1.5" />
<path d="M183 104.5l4.5 6.5" fill="none" stroke="#4a4af0" stroke-width="1" />
<path d="M195.5 98l4 5" fill="none" stroke="#444" stroke-width="1" />
<path d="M199 103.5l2.5-2l6 8.5l-2.5 3z" fill="#4a4a4a" stroke="#444" stroke-width="1.5" />
<path d="M201 104.5l4.5 6.5" fill="none" stroke="#4a4af0" stroke-width="1" />
<path d="M306.5 104h6l-3.0 3.5999999999999996z" fill="#aaa" stroke="none" stroke-width="1" />
<path d="M318 115h5l-2.5 3.0z" fill="#111" stroke="none" stroke-width="1" />
<path d="M698.5 104h6.5l-3.25 3.9z" fill="#111" stroke="none" stroke-width="1" />
<path d="M712.5 116h5l-2.5 3.0z" fill="#111" stroke="none" stroke-width="1" />
<path d="M997.5 114h5l-2.5 3.0z" fill="#111" stroke="none" stroke-width="1" />
<path d="M1042.5 191.5h9v11h-9z" fill="none" stroke="#888" stroke-width="1" stroke-dasharray="2 1.5"/>
<circle cx="1042.5" cy="190.5" r="2.5" fill="#f0f040"/>
<path d="M1062 191l10 11M1072 191l-10 11" fill="none" stroke="#999" stroke-width="1.6" />
<path d="M1087 190l-4.5 5h3v7h3v-7h3z" fill="#999" stroke="none" stroke-width="1" />
<rect x="1044" y="213.5" width="163" height="1.2" fill="#9a9ca8"/>
<path d="M1042.5 224h3v13h-3zM1043 237h11l-8-10" fill="none" stroke="#555" stroke-width="1.2" />
<path d="M1046 228l8 9" fill="none" stroke="#5050f0" stroke-width="1" />
<circle cx="1087.5" cy="231.5" r="6" fill="#4a4ae0" stroke="#e04040" stroke-width="1.2"/>
<path d="M1084 235l7-7" fill="none" stroke="#e04040" stroke-width="1" />
<ellipse cx="1107.5" cy="232.5" rx="6" ry="3.5" fill="none" stroke="#333" stroke-width="1.2"/><circle cx="1107.5" cy="232.5" r="2" fill="#333"/>
<path d="M1102 228l-1-3M1105 227l-.5-3M1110 227l.5-3M1113 228l1-3" fill="none" stroke="#333" stroke-width="1" />
</svg>
<svg width="1213" height="900" viewBox="0 0 1213 900" style="position:absolute;left:0;top:0">
<path d="M771 770 L771.5 700 L773 662 Q776 644 792 641 L856 640 L888 637 L935 641 Q945 645 945 660 L945 760 Z" fill="#000"/>
<path d="M780.5 758 L780.5 666 Q782 652 792 649.5 L857 648.5 L857 758 Z" fill="#ff5500"/>
<path d="M893 758 L893 651 L930 652 Q935 653 935.5 665 L936 758 Z" fill="#3dd232"/>
<path d="M800 758 L797 670 L822 662 L857 731 L862 649 L888 643 L893 646 L925 758 L900 758 L877.5 692 L876 758 L848 758 L821 705 L821.5 758 Z" fill="#000" stroke="#000" stroke-width="12" stroke-linejoin="round"/>
<path d="M826 724 L841 758 L826 758 Z" fill="#3dd232"/>
<path d="M882 712 L894 758 L883 758 Z" fill="#3dd232"/>
<path d="M800 758 L797 670 L822 662 L857 731 L862 649 L888 643 L893 646 L925 758 L900 758 L877.5 692 L876 758 L848 758 L821 705 L821.5 758 Z" fill="#ffd400"/>
<ellipse cx="785.5" cy="698" rx="2.5" ry="3.5" fill="#000"/>
<ellipse cx="786.5" cy="727.5" rx="2.6" ry="17" fill="#000"/>
<path d="M907 667 Q912 672 916 690 L913 692 Q906 678 907 667 Z" fill="#000"/>
<ellipse cx="918" cy="701" rx="2.5" ry="5" fill="#000" transform="rotate(-15 918 701)"/>
<path d="M954 770 L955 660 Q956 643 970 642 L1075 642 L1081 639 L1110 643 Q1127 648 1127 668 L1127 760 Z" fill="#000"/>
<path d="M964.5 757.5 L964.5 660 Q965 651 974 650.5 L1062 650 L1062 757.5 Z" fill="#bd8fdd"/>
<path d="M1066 757.5 L1080 653 L1105 651.5 Q1118 655 1118.5 670 L1119 757.5 Z" fill="#00c8cc"/>
<path d="M982 677 L1012 667 L1040 700 L1055 657 L1080 649 L1061 722 L1063 758 L1037 758 L1030 734 Z" fill="#000" stroke="#000" stroke-width="12" stroke-linejoin="round"/>
<path d="M982 677 L1012 667 L1040 700 L1055 657 L1080 649 L1061 722 L1063 758 L1037 758 L1030 734 Z" fill="#0a7fcf"/>
<path d="M1030 740 L1033 757.5 L1028 757.5 Z" fill="#bd8fdd"/>
<ellipse cx="991" cy="705" rx="3" ry="9" fill="#000" transform="rotate(-35 991 705)"/>
<path d="M1005 720 L1013 725 L1011 730 Z" fill="#000"/>
<path d="M1100 658 L1110 664 L1112 688 L1108 690 L1106 668 Z" fill="#000"/>
<path d="M1084 687 L1087 686 L1078 705 L1076 705 Z" fill="#000"/>
<path d="M1071 730 L1073 729 L1076 755 L1072 755 Z" fill="#000"/>
<path d="M1107 639 Q1126 640 1129 652 L1129 666" fill="none" stroke="#000" stroke-width="3"/>
<path d="M1128 676 L1132 681 L1128 686 Z" fill="#000"/>
<rect x="770" y="757.5" width="181" height="52.5" fill="#fff"/>
<rect x="951" y="757.5" width="176" height="52.5" fill="#000"/>
<rect x="764" y="810" width="370" height="5" fill="#000"/>
<rect x="764" y="815" width="370" height="40" fill="#fff"/>
<path d="M771 757 L780 757 Q776 785 781 806 L774 806 Q767 785 771 757 Z" fill="#000"/>
<path d="M763 762 L767 762 L768 770 L764 769 Z" fill="#000"/>
<path d="M1128 765 L1131 768 L1131 800 L1127 800 Z" fill="#000"/>
<text x="780.5" y="809" font-family="Liberation Sans" font-weight="bold" font-size="63" fill="#000" stroke="#000" stroke-width="3.2" textLength="163.5" lengthAdjust="spacingAndGlyphs">PROJECT</text>
<text x="953.5" y="809" font-family="Liberation Sans" font-weight="bold" font-size="61" fill="#fff" stroke="#fff" stroke-width="3" textLength="166" lengthAdjust="spacingAndGlyphs">BAZAAR</text>
<text x="944" y="839.5" font-family="Liberation Sans" font-style="italic" font-weight="normal" font-size="27" fill="#000" stroke="#000" stroke-width="1.1" stroke-linejoin="round" textLength="185" lengthAdjust="spacingAndGlyphs">Projects Unlimited</text>
</svg></body></html>
